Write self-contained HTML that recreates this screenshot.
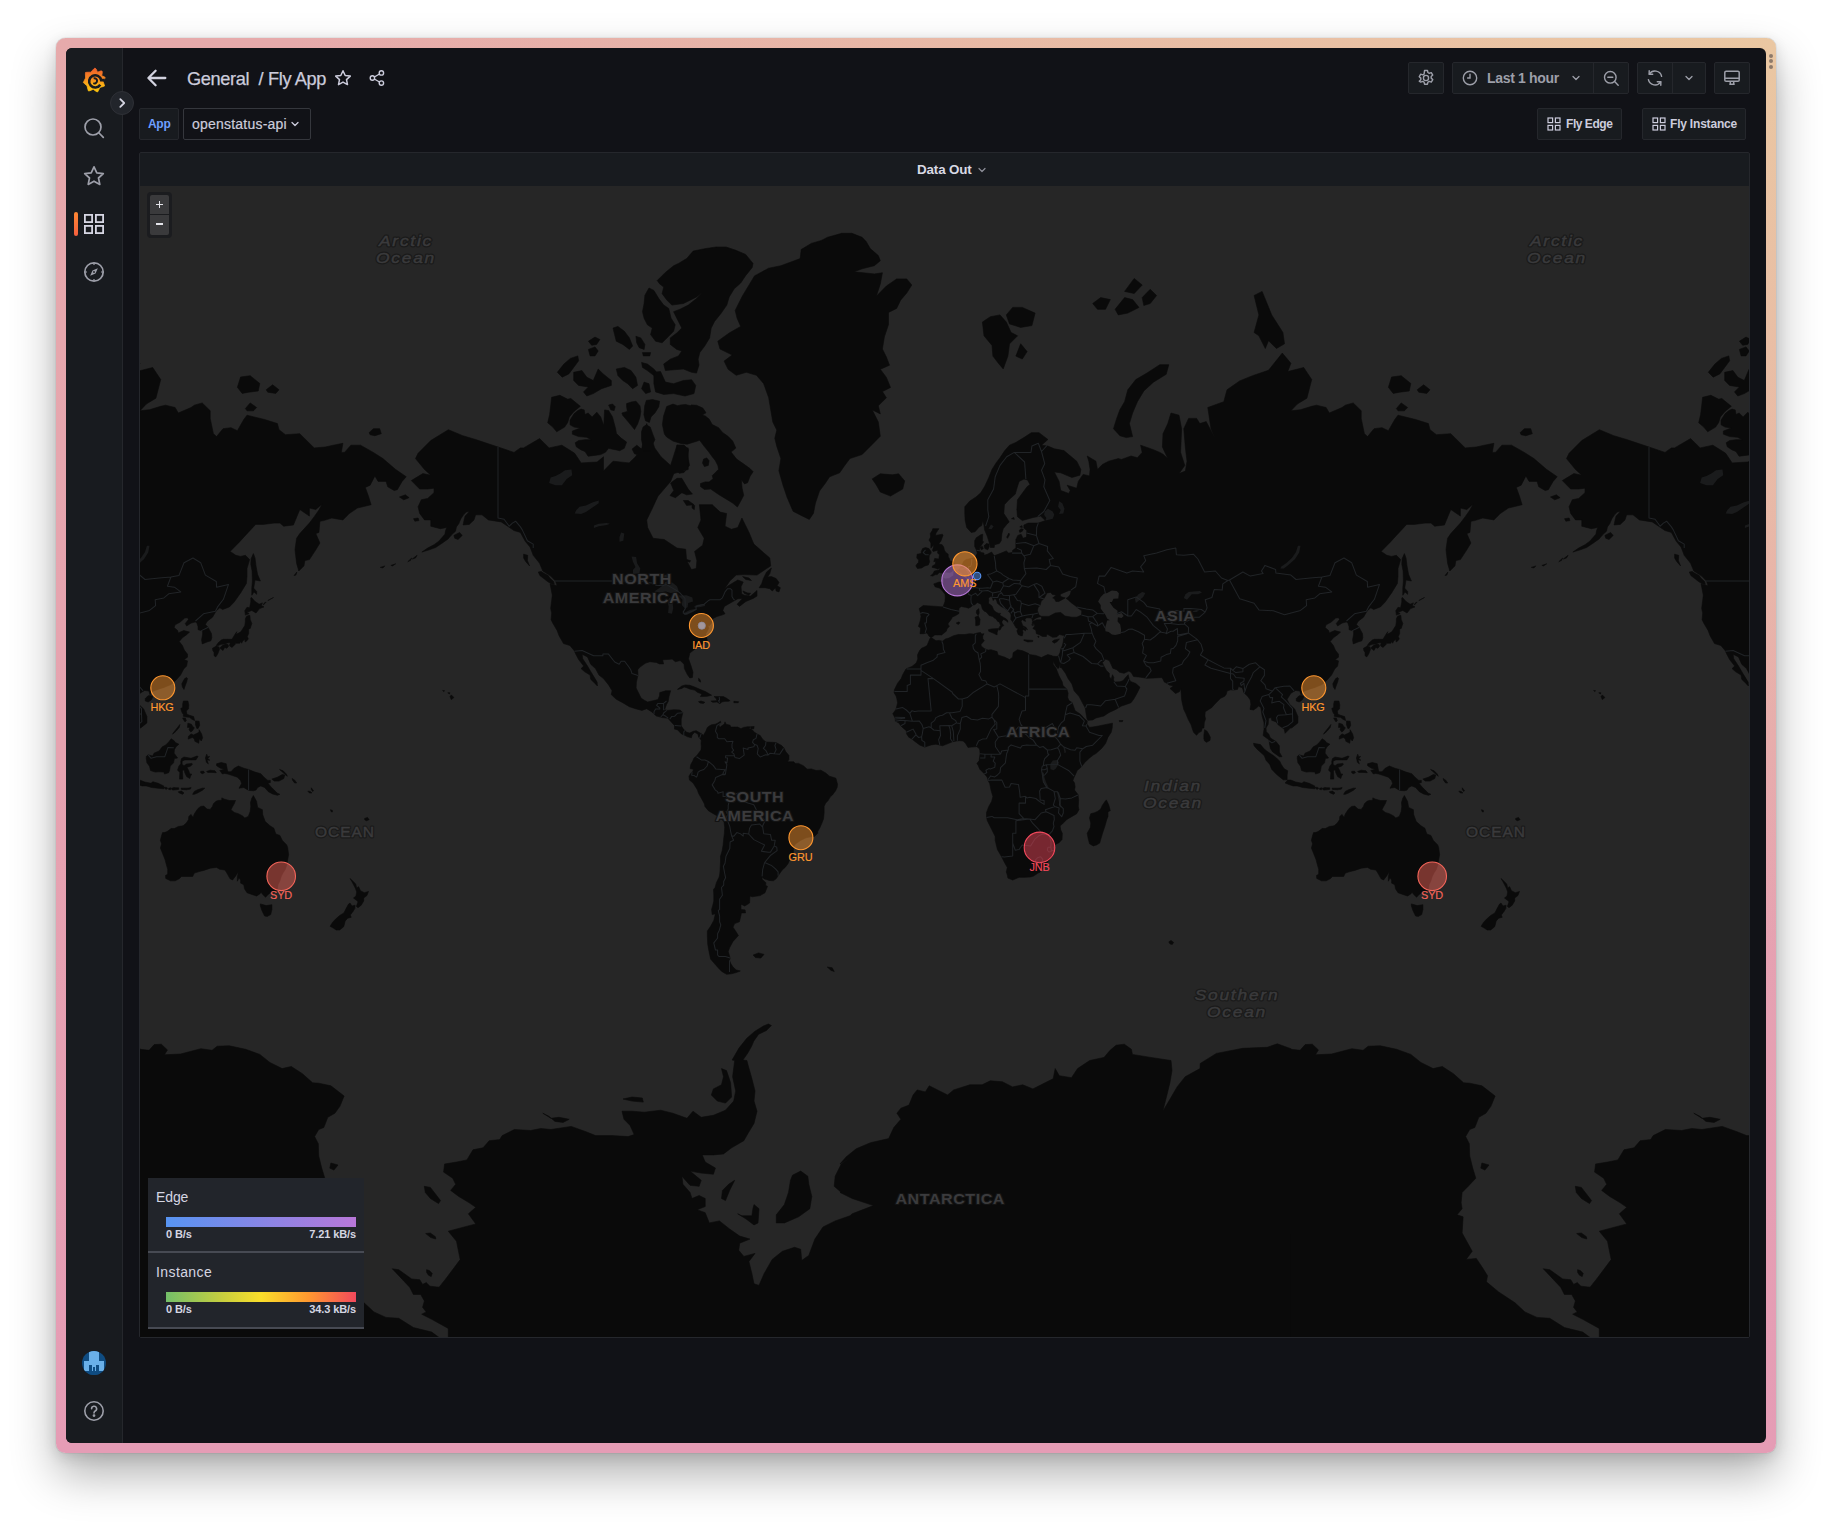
<!DOCTYPE html>
<html lang="en">
<head>
<meta charset="utf-8">
<title>Fly App - Grafana</title>
<style>
*{box-sizing:border-box;margin:0;padding:0}
html,body{width:1832px;height:1527px;overflow:hidden;background:#fff;font-family:"Liberation Sans",Arial,sans-serif;color:#ccccdc}
.abs{position:absolute}
#frame{position:absolute;left:56px;top:38px;width:1720px;height:1415px;border-radius:9.5px;
 background:radial-gradient(ellipse 120% 90% at 100% 0%,#eac7a2 0%,rgba(234,199,162,.6) 35%,rgba(234,199,162,0) 72%),linear-gradient(180deg,#e6aaab 0%,#e6a3b0 50%,#e59cb5 100%);
 box-shadow:0 0 1px rgba(0,0,0,.45),0 22px 45px rgba(0,0,0,.30),0 4px 14px rgba(0,0,0,.12)}
#win{position:absolute;left:10px;top:10px;width:1700px;height:1395px;border-radius:6px;background:#111217;overflow:hidden}
#side{position:absolute;left:0;top:0;width:57px;height:100%;background:#181b1f;border-right:1px solid #25272c}
.ico{position:absolute;display:block}
.btn{position:absolute;background:#181b1f;border:1px solid #25272c;border-radius:2px}
.t{position:absolute;white-space:nowrap;line-height:1}
#map{position:absolute;left:0;top:0}
.lbl{font-family:"Liberation Sans",Arial,sans-serif;font-size:10.9px;font-weight:400;text-anchor:middle;letter-spacing:-.15px;stroke-width:.15px}
.cont{font-family:"Liberation Sans",Arial,sans-serif;font-weight:700;font-size:15.5px;fill:#3b3b3d;text-anchor:middle;letter-spacing:.6px}
.ocean{font-family:"Liberation Sans",Arial,sans-serif;font-style:italic;font-weight:700;font-size:15.5px;fill:#1f1f1f;stroke:#444446;stroke-width:1.7px;text-anchor:middle;letter-spacing:1.3px;paint-order:stroke;stroke-linejoin:round}
.ocean2{font-family:"Liberation Sans",Arial,sans-serif;font-weight:700;font-size:15.5px;fill:#1f1f1f;stroke:#444446;stroke-width:1.7px;text-anchor:middle;letter-spacing:1.1px;paint-order:stroke;stroke-linejoin:round}
</style>
</head>
<body>
<div id="frame"><div id="win">
<!-- coordinates inside #win are page coords minus (66,48) -->
<div id="side"></div>

<!-- grafana logo -->
<svg class="ico" style="left:16px;top:19px" width="25" height="27" viewBox="0 0 25 27">
 <defs><linearGradient id="lg" x1="0" y1="1" x2="0" y2="0"><stop offset="0" stop-color="#fcc40c"/><stop offset=".3" stop-color="#fbb015"/><stop offset=".55" stop-color="#f68a21"/><stop offset="1" stop-color="#f05f2b"/></linearGradient></defs>
 <path fill="url(#lg)" stroke="url(#lg)" stroke-width=".8" stroke-linejoin="round" d="M11.8,1.9 13.0,1.0 14.1,2.0 15.5,5.2 18.5,4.0 20.0,4.0 20.3,5.4 19.7,8.7 22.1,9.7 23.2,10.5 22.7,11.7 21.0,14.5 22.2,17.6 22.5,19.0 21.2,19.5 17.8,20.4 16.3,23.8 15.5,25.0 14.2,24.4 11.2,22.3 7.9,23.7 6.5,24.0 6.0,22.7 5.0,18.7 2.3,16.4 1.3,15.5 1.9,14.3 3.6,11.0 3.4,6.9 3.5,5.5 4.9,5.3 8.9,5.2Z"/>
 <path d="M22.8 13.1h-3.6a6.1 6.1 0 1 0-.9 4.700" fill="none" stroke="#181b1f" stroke-width="2.600"/>
 <path d="M11.300 16.200a2.600 2.600 0 1 0 .3-4.800" fill="none" stroke="#181b1f" stroke-width="2"/>
</svg>

<!-- sidebar icons -->
<svg class="ico" style="left:17px;top:69px" width="22" height="22" viewBox="0 0 22 22" fill="none" stroke="#9d9fa9" stroke-width="1.700" stroke-linecap="round"><circle cx="10" cy="10" r="8"/><path d="M16 16l4.300 4.300"/></svg>
<svg class="ico" style="left:17px;top:117px" width="22" height="22" viewBox="0 0 22 22" fill="none" stroke="#9d9fa9" stroke-width="1.700" stroke-linejoin="round"><path d="M11 1.800l2.800 6 6.500.800-4.800 4.400 1.300 6.400L11 16.200l-5.800 3.200 1.300-6.400L1.700 8.600l6.500-.8z"/></svg>
<div class="abs" style="left:8px;top:164px;width:4px;height:24px;border-radius:2px;background:linear-gradient(#ff8833,#f55f3e)"></div>
<svg class="ico" style="left:17px;top:165px" width="22" height="22" viewBox="0 0 22 22" fill="none" stroke="#d6d6e3" stroke-width="1.800"><rect x="1.900" y="1.900" width="7.200" height="7.200"/><rect x="12.900" y="1.900" width="7.200" height="7.200"/><rect x="1.900" y="12.900" width="7.200" height="7.200"/><rect x="12.900" y="12.900" width="7.200" height="7.200"/></svg>
<svg class="ico" style="left:17px;top:213px" width="22" height="22" viewBox="0 0 22 22" fill="none" stroke="#9d9fa9" stroke-width="1.700"><circle cx="11" cy="11" r="9.200"/><path d="M14.800 7.200l-2.300 5.300-5.300 2.300 2.300-5.300z" fill="#9d9fa9" stroke="none"/><circle cx="11" cy="11" r=".9" fill="#181b1f" stroke="none"/><path d="M11 2v2M11 18v2M2 11h2M18 11h2" stroke-width="1.200"/></svg>

<!-- avatar -->
<svg class="ico" style="left:16px;top:1303px" width="24" height="24" viewBox="0 0 24 24"><defs><clipPath id="av"><circle cx="12" cy="12" r="12"/></clipPath></defs><g clip-path="url(#av)"><rect width="24" height="24" fill="#0f4c81"/><path d="M7 0h10v14h-3v6h-1v-4h-2v4h-1v-6H7z" fill="#6ab0e8"/><path d="M2 10h5v10H2zM17 10h5v10h-5z" fill="#6ab0e8"/><path d="M0 20h24v4H0z" fill="#0f4c81"/></g></svg>
<!-- help -->
<svg class="ico" style="left:17px;top:1352px" width="22" height="22" viewBox="0 0 22 22" fill="none" stroke="#9d9fa9" stroke-width="1.600"><circle cx="11" cy="11" r="9.200"/><path d="M8.600 8.800a2.500 2.500 0 1 1 3.600 2.200c-.8.500-1.200.9-1.200 1.900" stroke-linecap="round"/><circle cx="11" cy="15.600" r=".6" fill="#9d9fa9"/></svg>

<!-- sidebar toggle -->
<div class="abs" style="left:44px;top:43px;width:24px;height:24px;border-radius:12px;background:#22252b;border:1px solid #2e3036"></div>
<svg class="ico" style="left:50px;top:49px" width="12" height="12" viewBox="0 0 12 12" fill="none" stroke="#d5d5e2" stroke-width="1.800" stroke-linecap="round" stroke-linejoin="round"><path d="M4.300 2.200L8.200 6 4.300 9.800"/></svg>

<!-- top nav -->
<svg class="ico" style="left:80px;top:20px" width="22" height="20" viewBox="0 0 22 20" fill="none" stroke="#d2d2df" stroke-width="2.300" stroke-linecap="round" stroke-linejoin="round"><path d="M19.300 10H3M9.600 2.800L2.400 10l7.200 7.200"/></svg>
<div class="t" id="title" style="left:121px;top:22px;font-size:18.2px;color:#ccccdc;letter-spacing:-.36px;-webkit-text-stroke:.25px #ccccdc">General&nbsp; / Fly App</div>
<svg class="ico" style="left:268px;top:21px" width="18" height="18" viewBox="0 0 18 18" fill="none" stroke="#ccccdc" stroke-width="1.500" stroke-linejoin="round"><path d="M9 1.800l2.200 4.700 5.100.6-3.800 3.500 1 5L9 13.100l-4.500 2.500 1-5L1.700 7.100l5.100-.6z"/></svg>
<svg class="ico" style="left:302px;top:21px" width="18" height="18" viewBox="0 0 18 18" fill="none" stroke="#ccccdc" stroke-width="1.400"><circle cx="13.400" cy="3.900" r="2.200"/><circle cx="4.400" cy="9" r="2.200"/><circle cx="13.400" cy="14.100" r="2.200"/><path d="M6.300 8l5.200-3M6.300 10l5.200 3"/></svg>

<!-- right toolbar -->
<div class="btn" style="left:1342px;top:14px;width:36px;height:32px"></div>
<svg class="ico" style="left:1351px;top:21px" width="18" height="18" viewBox="0 0 16 16" fill="none" stroke="#9d9fa9" stroke-width="1.25"><circle cx="8" cy="8" r="2.300"/><path d="M6.700 1.300h2.600l.4 1.800 1.200.7 1.800-.6 1.300 2.200-1.400 1.300v1.400l1.400 1.300-1.300 2.200-1.800-.6-1.200.7-.4 1.800H6.700l-.4-1.800-1.200-.7-1.800.6L2 10.800l1.400-1.300V8.100L2 6.800l1.300-2.200 1.800.6 1.200-.7z" stroke-linejoin="round"/></svg>

<div class="btn" style="left:1386px;top:14px;width:177px;height:32px"></div>
<div class="abs" style="left:1527px;top:14px;width:1px;height:32px;background:#25272c"></div>
<svg class="ico" style="left:1396px;top:22px" width="16" height="16" viewBox="0 0 16 16" fill="none" stroke="#9d9fa9" stroke-width="1.400" stroke-linecap="round"><circle cx="8" cy="8" r="6.700"/><path d="M8 4.300V8H5.600"/></svg>
<div class="t" id="tp" style="left:1421px;top:23px;font-size:14px;font-weight:700;color:#9d9fa9;letter-spacing:-.32px">Last 1 hour</div>
<svg class="ico" style="left:1505px;top:26px" width="10" height="8" viewBox="0 0 10 8" fill="none" stroke="#9d9fa9" stroke-width="1.300" stroke-linecap="round" stroke-linejoin="round"><path d="M2 2.500l3 3 3-3"/></svg>
<svg class="ico" style="left:1537px;top:22px" width="17" height="17" viewBox="0 0 17 17" fill="none" stroke="#9d9fa9" stroke-width="1.400" stroke-linecap="round"><circle cx="7.300" cy="7.300" r="5.800"/><path d="M11.600 11.600l3.600 3.600M4.800 7.300h5"/></svg>

<div class="btn" style="left:1571px;top:14px;width:69px;height:32px"></div>
<div class="abs" style="left:1606px;top:14px;width:1px;height:32px;background:#25272c"></div>
<svg class="ico" style="left:1580px;top:21px" width="18" height="18" viewBox="0 0 18 18" fill="none" stroke="#9d9fa9" stroke-width="1.450" stroke-linecap="round" stroke-linejoin="round"><path d="M15.600 7.300A6.800 6.800 0 0 0 3.300 5.100M2.400 10.700a6.800 6.800 0 0 0 12.300 2.200"/><path d="M3.200 1.800v3.500h3.500M14.800 16.200v-3.500h-3.500"/></svg>
<svg class="ico" style="left:1618px;top:26px" width="10" height="8" viewBox="0 0 10 8" fill="none" stroke="#9d9fa9" stroke-width="1.300" stroke-linecap="round" stroke-linejoin="round"><path d="M2 2.500l3 3 3-3"/></svg>

<div class="btn" style="left:1648px;top:14px;width:36px;height:32px"></div>
<svg class="ico" style="left:1657px;top:21px" width="18" height="18" viewBox="0 0 18 18" fill="none" stroke="#9d9fa9" stroke-width="1.500" stroke-linejoin="round"><rect x="1.800" y="2.300" width="14.400" height="10" rx="1.300"/><path d="M1.800 9.300h14.400M6.300 15.300h5.400M7.300 12.300v3M10.700 12.300v3"/></svg>

<!-- submenu -->
<div class="btn" style="left:73px;top:60px;width:40px;height:32px"></div>
<div class="t" id="app" style="left:82px;top:70px;font-size:12px;font-weight:700;color:#6e9fff;letter-spacing:-.3px">App</div>
<div class="abs" style="left:117px;top:60px;width:128px;height:32px;border:1px solid #35373d;border-radius:2px;background:#111217"></div>
<div class="t" id="sel" style="left:126px;top:69px;font-size:14px;color:#ccccdc;letter-spacing:.22px;-webkit-text-stroke:.2px #ccccdc">openstatus-api</div>
<svg class="ico" style="left:224px;top:72px" width="10" height="8" viewBox="0 0 10 8" fill="none" stroke="#ccccdc" stroke-width="1.300" stroke-linecap="round" stroke-linejoin="round"><path d="M2 2.500l3 3 3-3"/></svg>

<div class="btn" style="left:1471px;top:60px;width:85px;height:32px"></div>
<svg class="ico" style="left:1481px;top:69px" width="14" height="14" viewBox="0 0 14 14" fill="none" stroke="#ccccdc" stroke-width="1.200"><rect x="1" y="1" width="4.600" height="4.600"/><rect x="8.400" y="1" width="4.600" height="4.600"/><rect x="1" y="8.400" width="4.600" height="4.600"/><rect x="8.400" y="8.400" width="4.600" height="4.600"/></svg>
<div class="t" id="fe" style="left:1500px;top:70px;font-size:12px;font-weight:700;color:#ccccdc;letter-spacing:-.45px">Fly Edge</div>
<div class="btn" style="left:1576px;top:60px;width:104px;height:32px"></div>
<svg class="ico" style="left:1586px;top:69px" width="14" height="14" viewBox="0 0 14 14" fill="none" stroke="#ccccdc" stroke-width="1.200"><rect x="1" y="1" width="4.600" height="4.600"/><rect x="8.400" y="1" width="4.600" height="4.600"/><rect x="1" y="8.400" width="4.600" height="4.600"/><rect x="8.400" y="8.400" width="4.600" height="4.600"/></svg>
<div class="t" id="fi" style="left:1604px;top:70px;font-size:12px;font-weight:700;color:#ccccdc;letter-spacing:-.2px">Fly Instance</div>

<!-- panel -->
<div class="abs" style="left:73px;top:104px;width:1611px;height:1186px;background:#181b1f;border:1px solid #25272c;border-radius:2px"></div>
<div class="t" id="ptitle" style="left:851px;top:114.5px;font-size:13.4px;font-weight:700;color:#d8d9e4;letter-spacing:-.15px">Data Out</div>
<svg class="ico" style="left:911px;top:118px" width="10" height="8" viewBox="0 0 10 8" fill="none" stroke="#8e8f99" stroke-width="1.200" stroke-linecap="round" stroke-linejoin="round"><path d="M2 2.500l3 3 3-3"/></svg>

<!-- map: page coords via viewBox offset -->
<svg id="map" class="abs" style="left:74px;top:138px" width="1609" height="1151" viewBox="140 186 1609 1151">
<rect x="140" y="186" width="1609" height="1151" fill="#262626"/>
<defs><clipPath id="mc"><rect x="140" y="186" width="1609" height="1151"/></clipPath>
<g id="world"><path d="M929.9,638.5 931.9,638.1 936,640.8 939.2,640.4 942.4,641.2 945.6,638.9 948.8,638.1 953.6,635.7 958.4,634.5 964.8,634.5 969.6,633.7 973.7,634.1 977.6,632.9 980.5,632.5 981.7,634.1 984,633.7 982.7,636.1 982.7,638.5 984.3,640.8 981.1,644.3 981.1,645.9 984.3,648.6 988.1,650.1 991,649.7 997.1,651.6 998,655 1004.8,657.2 1009.5,659.5 1012.7,657.2 1013.1,652.7 1017.5,649.7 1022.7,650.8 1028.7,653.5 1029.4,654.6 1035.8,655.4 1041.5,657.6 1044.4,656.1 1047.9,654.6 1052.1,655.7 1053,660.9 1053.3,664.6 1056.2,668.6 1058.8,675.4 1062.3,682.1 1062.9,685.6 1066.8,689.1 1068.1,693.2 1067.7,697.3 1068.7,700.3 1072.2,702.7 1075.1,710.7 1080.5,714.3 1084.4,718.6 1087.2,720.9 1086.9,723.9 1089.5,727.4 1095.9,726.5 1102.3,725.2 1108.7,723.9 1112.5,723.2 1112.2,727.8 1111.2,732.3 1108,737.2 1105.5,743.6 1101.6,748.4 1095.9,753.5 1093.6,754.8 1089.5,758 1084.7,762.5 1081.5,766.6 1079.6,768.6 1077.3,770.2 1075.7,774 1074.1,777.2 1072.9,780.4 1074.5,783 1075.1,786.9 1074.5,790.1 1078,794.6 1078.6,799.9 1078.3,806.4 1078.9,809.7 1076.7,813.7 1070.3,817.4 1066.8,819.4 1062.3,824.1 1060.1,825.8 1060.7,829.9 1062.3,833.3 1062,839.6 1059.1,842.7 1054.3,844.9 1053,847.3 1054,850.9 1052.4,856.3 1047.9,861.5 1044.7,866.7 1039.9,872.3 1038,873.1 1033.5,876.1 1030.6,876.9 1025.5,877.3 1019.1,877.3 1012.7,880 1007.9,878.1 1007.3,875 1006.3,871.9 1007.3,867.4 1004.1,861.8 1001.6,856.7 997.4,849.5 995.2,840.3 995.2,836.4 991.6,829.2 987.2,820.4 986.5,816.4 986.5,812.4 988.8,806.4 991.6,801.5 992.9,796.6 991,790.1 989.7,783.6 988.1,780.4 987.2,777.2 984.3,773.7 979.8,769.2 978.2,765.4 976.9,763.4 979.2,760.6 979.5,757.7 980.1,753.8 979.8,750 979.2,748.4 976.6,746.5 975.3,746.8 971.2,747.1 968,747.4 965.7,743.6 963.2,741 959.7,740.7 956.5,741 952.6,741.7 948.8,743.3 945.6,744.6 942.4,745.8 939.2,744.9 936,744.2 931.2,744.9 924.8,747.1 920,745.2 914.3,741 912,739.1 908.8,737.2 906.6,733.9 906.3,730.7 902.4,727.4 900.8,725.8 898.9,722.9 895.4,721.2 895.1,718 892.8,713.7 896,709.4 897.6,702.7 896.7,698 896,695.9 894.1,692.8 894.4,689.8 897.6,683.2 901.2,678.6 902.8,674.4 906,669 907.6,668.2 912,666.4 916.2,663.1 917.8,659.1 917.5,655 919.4,650.8 921.6,648.2 924.5,647 927.1,645.5 928.7,641.6ZM1106.4,799.9 1108.7,804.8 1110.3,810.7 1108,811.7 1108,816.4 1106.7,819.7 1104.8,826.5 1102.3,834 1099.7,843.1 1096.5,844.9 1093.3,845.9 1089.5,843.8 1088.2,838.5 1087.2,833.3 1090.4,827.5 1090.8,823.1 1089.5,818 1090.8,813.7 1094.6,812.7 1097.5,811.4 1100.7,809.1 1102.3,805.4 1104.8,801.8ZM140,1049.3 149.1,1050.3 154.2,1044.6 161.3,1044.2 167.4,1049.9 164.4,1054.8 180.6,1054 200.9,1048.7 212.1,1050.3 217.2,1046.2 229.3,1045.8 245.6,1049.3 259.8,1054.4 269.9,1062.5 282.1,1068.6 291.3,1066.5 302.4,1073.7 312.6,1082.8 318.7,1083.2 330.9,1085.8 344.1,1096 340,1106.1 334.9,1113.2 327.8,1117.3 323.8,1127.5 318.7,1129.5 314.6,1136.6 318.3,1143.7 318.7,1155.9 321.7,1168.1 324.8,1178.2 317.2,1186.3 311.1,1192.4 310.1,1202.6 311.1,1208.7 306,1214.8 312.1,1216.8 311.1,1233 321.2,1251.3 315.1,1259.4 325.3,1258.4 331.4,1267.6 336.5,1275.7 335.4,1281.8 347.6,1291.9 364,1302.8 373.9,1311.9 385.9,1317.4 398.7,1318.3 413.4,1327.5 431.7,1332.1 439.1,1337.5 439.1,1352 448.3,1352 448.3,1328.4 431.7,1319.3 421.7,1314.2 426.2,1311.9 422.6,1307.3 424.4,1300.9 420.7,1294.5 413.4,1294.5 409.7,1287.2 392.3,1268.8 398.7,1269.7 411.6,1278.9 419.8,1279.8 422.6,1284.4 426.2,1282.6 429.9,1286.2 439.1,1287.2 446.4,1278 460.2,1259.6 456.5,1241.3 448.3,1231.2 475.8,1223.9 468.4,1213.8 475.8,1207.3 468.9,1202.6 458.8,1196.5 450.7,1190.4 455.7,1184.3 452.7,1178.2 443.6,1172.1 444.6,1164 456.8,1162 466.9,1159.9 473,1149.8 483.1,1147.8 489.2,1140.7 500,1139.6 499.1,1140.7 502.2,1135.6 514.4,1129.5 530.6,1130.5 540.8,1128.5 550.9,1129.5 571.2,1126.4 585.4,1131.5 595.6,1135.6 611.8,1135.6 628.1,1136.6 634.2,1134.6 630.1,1125.4 624,1119.3 622,1111.2 632.1,1111.2 644.3,1112.2 660.6,1110.2 672.7,1113.2 687,1118.3 693,1111.2 701.2,1117.3 713.4,1115.3 725.5,1110.2 733.7,1101.1 735.7,1090.9 732.6,1076.7 734.7,1060.5 732.1,1060 739,1048.1 746.8,1038.3 754.7,1031.4 763.5,1026 768.4,1024 771.4,1025.5 766.5,1030.4 758.6,1034.3 753.7,1041.2 751.7,1046.1 747.8,1053 742.9,1060 746.9,1060.5 747.9,1064.5 751.9,1078.7 755,1090.9 754,1101.1 757,1111.2 754,1123.4 747.9,1133.6 743.8,1140.7 731.6,1147.8 723.5,1153.9 713.4,1154.9 702.2,1154.9 705.2,1162 715.4,1168.1 713.4,1174.2 701.2,1173.1 690,1171.1 701.2,1180.3 699.1,1186.3 690,1185.3 681.9,1176.2 682.9,1184.3 690,1192.4 692,1198.5 699.1,1195.5 705.2,1198.5 705.2,1206.6 697.1,1209.7 705.2,1212.7 709.3,1222.9 719.4,1220.9 729.6,1229 739.7,1236.1 749.9,1239.1 739.7,1243.2 738.7,1250.3 743.8,1256.4 755,1253.4 748.9,1261.5 751.9,1273.7 754,1283.8 759,1285.4 764.1,1273.7 772.2,1259.4 782.4,1251.3 794.6,1247.3 800.7,1249.3 801.7,1260.5 808.8,1255.4 814.9,1239.1 823,1227 835.2,1220.9 850,1215.8 852.2,1213.8 873.5,1205.6 852.2,1198.5 840,1192.4 841.3,1192.4 834.2,1186.3 835.2,1176.2 841.3,1164 850,1157.9 840,1164 846.1,1156.9 856.2,1148.8 870.5,1142.7 888.7,1138.6 893.8,1127.5 900.9,1119.3 896.9,1113.2 900.9,1108.2 909,1105.1 913.1,1095 917.2,1089.9 925.3,1091.9 929.3,1085.8 939.5,1090.9 947.6,1095 953.7,1089.9 969.9,1084.8 982.1,1084.8 990.3,1080.8 1002.4,1081.8 1012.6,1086.9 1022.7,1084.8 1032.9,1088.9 1045.1,1082.8 1053.2,1078.7 1055.2,1068.6 1059.3,1075.7 1071.5,1077.7 1077.6,1068.6 1089.7,1060.5 1104,1057.4 1110.1,1050.3 1116.1,1045.2 1124.3,1044.2 1131.4,1049.3 1132.4,1054.4 1150.7,1057.4 1171,1060.5 1172,1070.6 1169.9,1082.8 1166.9,1095 1162.8,1111.2 1168.9,1101.1 1177.1,1086.9 1185.2,1076.7 1200,1068.6 1200.2,1063.5 1216.4,1053.4 1242.8,1048.3 1267.2,1047.3 1277.3,1043.8 1290.9,1048.7 1291,1360 140,1360ZM792.5,1175.2 800.7,1171.1 807.8,1176.2 808.8,1184.3 811.8,1196.5 809.8,1208.7 798.6,1216.8 784.4,1222.9 776.3,1222.9 776.3,1214.8 784.4,1204.6 788.5,1192.4 790.5,1180.3ZM734.7,1180.3 729.6,1190.4 725.5,1200.6 721.5,1198.5 722.5,1190.4 728.6,1184.3ZM754,1204.6 759,1208.7 758,1222.9 754,1224.9 745.8,1218.8 737.7,1213.8 741.8,1215.8 751.9,1215.8 752.9,1208.7ZM721.5,1068.6 726.5,1070.6 730.6,1082.8 731.6,1097 725.5,1103.1 717.4,1101.1 711.3,1095 713.4,1088.9 721.5,1084.8 723.5,1076.7ZM623,1099 632.1,1097 642.3,1098 643.3,1102.1 632.1,1101.1ZM542.8,1113.2 548.9,1116.3 555,1121.4 563.1,1122.4 569.2,1119.3 559,1117.3 550.9,1118.3ZM424.3,1186.3 430.4,1187.4 440.5,1200.6 438.5,1203.6 430.4,1198.5 425.3,1192.4ZM330.9,1163 338,1165 333.9,1170.1 329.8,1168.1ZM425.7,1233.5 430.3,1233 435.4,1236.7 435.8,1239 430.8,1237.6ZM426.6,1269.7 429.4,1270.6 432.2,1273.4 431.2,1276.6 428.5,1275.2 426.6,1272.4ZM551.6,397.3 559.9,395.3 567.7,399.2 570.8,398.5 580.3,406.3 574,411.4 569.3,416.9 567.7,422.4 564.6,427.1 556.7,431.8 552.8,427.1 547.7,422.8 549.6,414.6 550.8,405.1ZM581.1,409.1 584.2,409.9 585,414.6 588.1,413 592.1,416.9 596.8,412.2 600.7,416.9 603.8,425.6 604.6,409.9 608.6,410.6 612.5,416.9 615.6,428.7 616.4,433.4 621.1,438.1 626.6,442.1 624.3,448.3 619.6,450.7 616.4,449.9 611.7,449.1 608.6,448.3 605.4,452.3 600.7,454.6 594.4,455.4 588.1,456.2 585,451.5 581.1,449.9 576.3,446.8 575.2,442.8 578.7,440.5 585,439.7 591.3,439.7 586.6,437.3 578.7,436.6 572.4,434.2 572.4,431.1 580.3,427.9 574,427.1 570.1,424.8 570.1,420.1 574,413.8 577.9,410.6ZM608.6,405.1 612.5,404 615.2,406.7 614.1,410.6 610.9,409.9ZM626.6,403.6 631.3,402 636,401.2 640,405.9 640.8,411.4 640,416.9 637.6,424 634.5,429.5 631.3,425.6 627.4,420.8 622.7,415.3 621.9,413 627.4,411.4 626.6,406.7ZM646.3,400.4 652.5,399.6 659.6,401.2 658.8,406.7 654.9,413 651,416.9 649.4,422.4 645.5,420.8 643.9,414.6 644.7,405.9ZM646.3,424.8 650.2,427.1 652.5,433.4 654.9,439.7 652.5,444.4 651,450.7 643.9,450.7 641.5,439.7 641.5,431.8 643.1,427.1ZM632.1,449.1 636.8,445.2 641.5,449.1 643.9,453.1 640,455.4 634.5,453.8ZM663.6,415.9 666.7,406.5 673,404.1 677.7,405.7 680.8,404.9 685.6,404.5 690.3,405.7 691.1,404.9 696.6,405.3 702.8,408.1 706,412.8 702.1,415.1 705.2,415.9 709.1,419.1 712.3,424.6 718.6,427.7 722.5,432.4 728,436.3 732.7,441.1 735.8,448.1 731.1,452.1 736.6,459.1 744.5,464.6 750,468.6 753.1,471.7 750,476.4 747.6,482.7 744.5,483.9 741.3,479.6 742.1,488.2 743.7,495.3 741.3,500 737.4,507 732.7,503.1 726.4,499.2 718.6,494.5 710.7,489 704.4,489.4 700.5,486.6 700.5,483.5 705.2,481.9 709.1,481.9 713.1,478.8 712.3,475.6 715.4,472.5 718.6,469.3 717.8,465.4 715.4,460.7 712.3,456.8 708.3,451.3 704.4,446.6 699.7,440.3 695,441.8 687.1,444.2 680.8,443.4 673,441.1 666.7,437.1 664.4,434 662.4,424.6ZM703.6,459.1 706.8,457.9 709.1,460.7 708.3,465.4 704.4,466.6 702.5,463.1ZM676.9,445 684,445 688.7,449.7 687.1,455.2 688.7,460.7 689.5,465.4 684,472.5 679.3,473.3 673.8,468.6 674.6,460.7 676.9,452.8ZM657.2,280.6 665.4,272.4 673.6,265.8 678.5,263.4 686.7,258.5 693.2,251.1 704.7,248.7 716.1,247 726,247 735.8,250.3 745.6,254.4 753,263.4 752.2,267.5 745.6,275.7 740.7,283 734.2,288.8 729.2,297 726.8,305.1 721.1,313.3 714.5,321.5 711.2,328.1 709.6,337.9 704.7,346.1 699.8,352.6 698.1,359.2 699,364.9 696.5,373.1 691.6,372.3 683.4,369 673.6,369.8 665.4,370.6 663.7,364.1 670.3,359.2 678.5,355.9 681.8,351 676.8,349.4 670.3,344.4 670.3,337.9 676.8,333 681.8,328.1 676.8,318.2 673.6,311.7 680.1,309.2 688.3,305.1 696.5,298.6 703,292 696.5,297 683.4,303.5 671.9,305.1 667,300.2 662.1,293.7 663.7,287.1 659.7,283.9ZM649,288 653.9,290.4 658.8,298.6 663.7,305.1 668.7,308.4 671.1,318.2 675.2,324.8 673.6,331.3 667,337.9 662.1,342.8 655.6,341.2 650.6,334.6 652.3,328.1 647.4,324.8 644.1,318.2 642.5,311.7 644.1,303.5 644.9,295.3ZM653.9,372.3 660.5,371.5 665.4,382.1 673.6,383.7 683.4,380.5 691.6,379.7 695.7,385.4 694,393.6 685,396 673.6,393.6 663.7,394.4 655.6,391.9 653.9,383.7ZM641.6,362.5 647.4,364.1 653.9,369 657.2,373.1 653.9,375.6 647.4,370.6 642.5,367.4ZM644.1,382.1 649,383.7 650.6,391.9 645.7,393.6 641.6,388.7ZM616.3,369 624.4,367.4 631,370.6 635.9,377.2 637.5,385.4 632.6,388.7 627.7,383.7 622.8,380.5 617.9,375.6ZM573.7,372.3 581.9,370.6 586.8,377.2 593.3,380.5 598.2,369 603.2,373.9 611.3,380.5 611.3,385.4 601.5,388.7 593.3,393.6 586.8,396 583.5,391.9 588.4,387 578.6,385.4 573.7,380.5ZM557.3,372.3 563.9,364.1 570.4,358.4 577.8,355.9 578.6,360.8 573.7,367.4 568.8,373.9 562.2,377.2ZM588.4,341.2 595,337.1 599.9,339.5 596.6,344.4 591.7,345.3ZM588.4,349.4 595,346.9 598.2,351 595,355.9 590.1,355.9ZM613,328.1 617.9,326.4 624.4,331.3 629.4,337.9 632.6,346.1 629.4,349.4 622.8,344.4 616.3,341.2 614.6,334.6ZM635.9,336.3 640.8,337.9 644.9,344.4 644.1,349.4 639.2,347.7 636.7,342.8ZM642.5,352.6 650.6,352.6 649.8,355.9 643.3,355.9ZM920,633.7 920.7,628 918.4,626.4 920.3,620.6 921,616.4 920.3,612.5 919.1,608.6 923.2,605.6 930.3,606 936.7,606.4 943,606.9 945,601.5 945.3,597 945,594.3 941.8,590.1 939.8,588.2 935.1,586.8 933.8,583.9 939.2,582 943.7,582.9 943.7,578 945,579 949.1,578.5 953.6,575.6 953.9,571.5 959,569.5 961.6,565.9 963.8,561.2 966.1,559.6 970.9,558.5 974.7,557.4 976.3,555.3 977.3,553.1 976.3,549.8 974.7,546.4 974.7,540.7 976.3,537.7 980.8,534.8 982.7,534.2 982.4,541.2 983.6,541.8 981.4,545.3 979.8,547 979.5,550.3 980.8,552.5 984,553.1 984,555.3 987.5,554.2 991.6,552 994.2,555.8 1000,553.6 1006.3,550.9 1008.6,553.1 1012.4,552.5 1012.7,550.3 1015.9,548.1 1015.9,539.5 1017.9,535.4 1021.1,534.2 1023,538.3 1026.5,537.1 1026.8,530.6 1023.9,528.1 1023.9,525 1028.1,523.1 1038.3,523.1 1045.4,520.6 1040.6,516.1 1033.5,517.4 1028.7,518.7 1022.3,520.6 1017.5,516.7 1016.9,509.5 1017.5,499.8 1021.7,494.1 1027.1,486.7 1030,484.5 1027.5,479.9 1023.9,479.1 1019.1,481.4 1016.9,488.2 1015.3,494.1 1008.9,499.8 1004.4,504.7 1003.8,513.5 1007.3,518.7 1009.2,521.9 1006.7,524.4 1003.2,528.7 1001.9,533.6 1001.2,540.7 999.3,543.5 994.5,544.7 994.2,547.5 990.4,547.5 989.4,543 987.2,536 984.6,529.9 984,525.6 982.7,520.6 981.7,525.6 979.2,526.9 975,531.8 971.2,532.4 966.7,527.5 965.1,519.9 964.8,513.5 964.8,506.8 969.6,501.2 976,497 980.8,492.7 984.9,486 988.8,477.5 992,469.5 996.1,462.9 1000,457.7 1004.8,450.6 1009.5,445.2 1015.9,442.4 1023.9,437.6 1031.3,432.7 1039,432.7 1047.9,439.5 1041.5,445.2 1047.9,446.1 1054.3,448.8 1063.9,450.6 1076.7,461.2 1080.8,469.5 1079.9,475.2 1071.9,477.5 1060.7,472.8 1054.3,471.9 1059.1,481.4 1060.7,490.5 1068.7,493.4 1070.3,490.5 1067.1,485.2 1076.7,488.2 1078.3,481.4 1083.1,474.4 1089.5,475.9 1090.1,469.5 1088.8,461.2 1087.2,456 1095.9,461.2 1097.5,469.5 1102.3,464.5 1108.7,461.2 1118.3,458.6 1121.5,459.4 1131,456 1137.4,457.7 1142.2,452.4 1140.6,445.2 1153.4,449.7 1159.8,452.4 1163,454.2 1167.8,458.6 1162.4,447 1163,433.7 1167.8,423.6 1171,413 1179,415.2 1181.6,428.7 1180.6,452.4 1184.8,465.4 1179,473.6 1185.4,471.1 1187,461.2 1185.4,447.9 1183.8,428.7 1188.6,418.4 1196.6,418.4 1199.8,423.6 1206.2,421.6 1212.6,433.7 1215.8,440.5 1211,428.7 1207.8,407.5 1223.8,401.7 1227,389.8 1239.7,380.9 1252.5,375.7 1268.5,370.3 1282.3,353.1 1290.9,363.3 1287.7,371.6 1303.7,367.5 1311.7,379.6 1306.9,398.2 1297.3,404 1290.9,410.8 1300.5,409.7 1311.7,406.3 1316.5,405.2 1326.1,407.5 1329.3,413 1342.1,407.5 1345.3,405.2 1353.2,402.9 1361.2,410.8 1361.2,418.4 1364.4,433.7 1367.6,436.6 1374,428.7 1382,427.7 1388.4,430.7 1394.8,419.5 1398,415.2 1415.6,419.5 1428.4,423.6 1430,429.7 1436.4,434.7 1450.8,433.7 1460.4,443.3 1465.2,447.9 1476.3,447 1484.3,445.2 1493.9,443.3 1492.3,452.4 1495.5,452.4 1501.9,445.2 1511.5,445.2 1524.3,452.4 1533.9,458.6 1546.7,469.5 1557.2,476.7 1553.1,481.4 1548.3,489.7 1545.1,490.5 1538.7,486.7 1537.1,481.4 1529.1,481.4 1525.9,475.9 1521.1,485.2 1516.3,487.5 1519.5,496.3 1522.1,504.7 1508.3,508.1 1500.3,513.5 1493.9,519.9 1482.7,518 1474.7,520.6 1470.9,521.2 1469.9,532.4 1466.8,533.6 1470.9,543 1466.8,549.8 1460.4,559.6 1455.9,560.6 1454.9,565.9 1449.8,571 1447.6,563.3 1446,549.8 1447.6,538.3 1450.8,533.6 1460.4,523.1 1465.2,516.7 1469.9,510.1 1473.1,504 1466.8,509.5 1460.4,508.1 1460.4,516.1 1450.8,509.5 1444.4,525 1434.8,526.2 1430.9,523.1 1425.2,523.1 1414,524.4 1406.6,524.4 1396.4,535.4 1390,542.4 1381.1,551.4 1386.8,555.3 1391.6,556.4 1396.4,555.3 1400.6,559.6 1398,568.5 1398,576.1 1397.4,583.4 1391.6,592.9 1385.2,602 1380.4,606.9 1373.7,609.5 1370.8,607.8 1367.6,610.4 1366.7,611.7 1363.5,617.2 1358,621.4 1356.4,624.4 1359,627.2 1362.5,633.7 1362.8,637.7 1361.9,640.8 1358,642 1353.2,643.9 1352.6,639.7 1353.6,634.5 1353.6,630.9 1349.1,629.7 1349.1,626.8 1347.8,622.7 1346.2,621.9 1342.1,623.1 1337.6,626 1336.3,623.5 1339.5,619.4 1338.5,617.7 1335.7,618.1 1330.9,622.3 1326.1,624.8 1325.1,627.6 1328.6,630.5 1329.3,632.9 1334.7,630.5 1340.5,632.1 1337.3,634.9 1333.4,637.7 1330.2,641.6 1333.4,645.5 1335.3,650.1 1338.5,654.2 1338.5,657.2 1335,659.5 1338.5,660.9 1337.6,666.1 1334.7,669 1331.5,675.1 1326.7,680.4 1321.9,684.6 1314.2,687.7 1311.7,688.4 1306.2,690.4 1302.1,691.8 1301.1,694.9 1299.9,691.1 1295.7,690.4 1290.9,693.2 1287.1,699.3 1289.3,704 1294.7,709 1297.9,716.6 1297.9,722.9 1291.9,727.8 1290.3,728.1 1285.1,733.3 1284.2,729.1 1281.3,727.1 1278.1,724.8 1276.2,721.9 1271.7,720.3 1271.4,717.6 1268.5,718.3 1268.2,724.2 1266,728.1 1266.3,731.7 1268.8,734.2 1270.4,738.1 1274.3,740.4 1276.2,741.7 1279.4,745.8 1279.4,752.2 1282,756.7 1279.4,756.7 1272.7,751.9 1270.4,748.4 1269.5,743.9 1269.2,740.1 1267.6,738.8 1263.1,735.5 1264,729.4 1264,722.5 1262.1,716 1261.2,710 1260.8,707.4 1258.6,706 1256.4,708 1253.5,710 1250,709.4 1250.9,704.4 1250.3,700 1247.7,696.3 1243.9,692.8 1242.9,689.4 1242.3,687.7 1238.5,686.6 1237.5,689.4 1233.4,690.1 1230.5,689.8 1227,691.1 1226.3,694.2 1224.7,696.3 1220.6,698.3 1215.1,703.7 1211.9,707.4 1208.4,709.7 1205.2,711.7 1204.9,716 1205.5,718.9 1204.3,722.5 1203.9,728.1 1202.3,728.1 1201.4,731.3 1198.8,732.6 1196.6,735.2 1193.7,732.6 1192.4,729.1 1191.1,724.8 1188.3,719.6 1185.7,713.3 1183.8,709.4 1182.2,702.7 1181.6,699.3 1181.2,693.2 1180.9,689.8 1180.9,688.4 1179.3,691.8 1175.5,693.5 1170,688.4 1173.6,686 1169.1,684.9 1166.9,683.2 1164.3,682.1 1163,679.3 1161.7,677.5 1155.3,677.9 1147,678.3 1140.6,677.2 1133.6,676.5 1131,672.2 1128.8,671.1 1124,673.3 1119.5,672.2 1116.7,669.7 1112.8,668.2 1111.2,664.6 1109.3,660.6 1105.5,659.1 1104.2,660.9 1102.3,662.4 1103.9,666.1 1106.4,670.4 1109.3,673.3 1109.3,676.5 1111.2,679.3 1112.5,674.7 1113.8,677.5 1113.5,680 1114.7,682.1 1119.9,681.8 1123,680.7 1125.6,677.5 1128.2,674.7 1129.1,678.6 1130.4,681.4 1135.8,683.5 1140,687.3 1136.5,694.2 1133.6,699.3 1131,702.7 1126.2,704.4 1121.5,706 1115.7,709.4 1108.7,712.7 1103.9,716 1095.9,718 1092.7,719.9 1087.9,720.3 1086.9,718.3 1086,713.3 1085.3,708 1082.4,702.7 1079.2,696.6 1074.1,690.8 1071.9,683.9 1068.1,678.6 1065.5,673.3 1061.3,667.5 1060.1,667.5 1060.4,662.4 1058.8,667.9 1058.1,668.6 1056.2,666.8 1053,660.9 1052.1,656.1 1056.9,656.5 1058.5,655.7 1060.1,652.4 1060.7,649.3 1062.3,645.9 1063.3,641.6 1063.6,638.5 1064.5,635.3 1062.6,635.3 1059.4,634.5 1056.5,636.9 1052.7,637.3 1047,634.1 1046.3,636.5 1042.5,636.5 1039,634.5 1036.4,633.7 1035.8,630.1 1032.9,628.5 1034.8,626 1034.2,623.5 1032.2,623.5 1032.6,621.4 1036.7,619.8 1041.5,619.8 1041.5,617.2 1041.8,616.4 1048.9,616.4 1055.3,613 1060.7,612.5 1064.9,616 1071.9,617.2 1076.7,617.2 1081.5,615.1 1081.8,610.8 1077.6,607.8 1075.7,606 1070.3,602 1068.1,599.7 1066.1,598.4 1068.7,596.6 1070.3,594.3 1071.3,590.5 1074.5,590.1 1069,590.5 1065.5,591.9 1061.3,593.8 1060.1,594.7 1060.7,596.6 1065.2,597.9 1062,599.7 1058.8,601.5 1055.9,601.5 1054.3,598.4 1052.7,597.9 1056.2,595.2 1052.1,594.3 1050.8,592.4 1047,592.9 1045.4,596.1 1043.8,598.8 1041.2,601.1 1040.2,605.1 1038,607.8 1037.4,610.8 1038.3,613 1039,615.1 1041.5,616.4 1038.3,617.2 1035.1,618.5 1032.6,621 1031.9,618.9 1031.6,618.1 1026.8,617.7 1024.9,618.9 1025.5,621.4 1023.6,620.6 1022,619.4 1021.1,621.4 1022.3,624.4 1023.3,627.2 1025.5,628.9 1025.5,630.9 1023.9,629.7 1022.3,630.1 1023,632.5 1022.3,635.7 1020.7,635.7 1018.2,634.5 1016.9,630.9 1018.2,628.5 1016.3,628 1015,626 1013.4,623.1 1012.4,621.4 1010.8,619.4 1011.1,615.1 1010.2,613 1007.9,610.8 1004.8,608.6 1001.2,606.4 997.4,603.3 996.4,599.7 994.8,598.4 993.2,600.6 992.3,597.5 992.6,596.6 990.7,596.6 988.4,597.9 988.8,600.2 988.4,603.3 992,606 993.6,609.9 995.8,612.1 998.7,613.4 1000.6,613.4 999.6,615.1 1003.2,617.2 1006.3,618.9 1007.9,621 1007.6,622.3 1006,620.6 1003.5,619.4 1001.9,621.4 1001.9,623.1 1003.8,625.6 1001.6,626.8 1000.9,628.5 1000,630.1 999,629.7 999.3,627.2 1000.6,625.6 999.3,621.9 997.7,621.4 996.1,618.9 994.5,618.1 992.6,616.4 989.1,615.5 987.8,613.8 985.9,611.7 984.3,611.2 982.4,609.1 981.7,606.4 981.1,604.2 980.1,603.8 977.3,602.4 975,604.7 972.8,605.1 970.9,606.9 968.6,608.2 965.7,607.3 963.2,606.9 961.3,606.4 959,608.2 958.7,611.2 959,613.4 955.8,615.5 952,617.2 951.7,618.5 947.8,623.9 949.4,626.4 947.2,628.5 946.2,631.3 942.7,634.1 941.8,634.9 937.6,634.9 934.7,634.9 931.9,637.3 930.9,637.7 928.7,635.7 928.3,634.5 926.4,632.9 923.5,633.7ZM735.2,310.4 742.3,296.2 754.5,275.9 768.7,268.2 780.9,265.7 789,262.7 800.2,258.6 801.2,249.5 811.3,243.4 821.5,240.4 827.6,237.3 841.8,233.3 851.9,233.3 862.1,237.3 866.1,241.4 870.2,248.5 878.3,255.6 880.3,260.7 874.3,265.7 862.1,268.8 854,271.8 874.3,273.9 882.4,272.8 880.3,284 876.3,296.2 886.4,286 896.6,278.9 906.7,278.9 911.8,285 906.7,293.1 900.6,300.2 896.6,308.4 888.5,312.4 888.5,324.6 884.4,336.8 882.4,349 886.4,357.1 889.5,365.2 880.3,369.3 886.4,377.4 890.5,387.5 882.4,391.6 886.4,397.7 878.3,405.8 880.3,413.9 872.2,409.8 878.3,422 880.3,436.2 870.2,446.4 862.1,454.5 849.9,458.6 843.8,466.7 839.7,472.8 829.6,476.8 825.5,482.9 819.5,491 815.4,503.2 813.4,513.4 809.3,519.4 801.2,515.4 793.1,511.3 787,497.1 782.9,484.9 778.9,470.7 780.9,458.6 776.8,446.4 774.8,438.3 776.8,430.1 772.8,422 770.7,409.8 768.7,397.7 763.6,383.5 756.5,375.3 746.4,372.3 736.2,375.3 728.1,369.3 724.1,361.1 732.2,355 720,349 717.8,341.2 729.2,333 740.7,326.4 737,318ZM872.2,478.9 880.3,473.8 892.5,474.8 898.6,473.8 904.7,480.9 902.7,489 890.5,496.1 880.3,492 876.3,484.9ZM1404.4,795.6 1407.6,801.5 1408.6,807.4 1413.4,809.7 1413.7,814.7 1416.2,821.4 1421,825.8 1424.9,828.2 1426.8,834 1430.9,835.4 1433.2,840.3 1437.7,844.9 1438.6,847.3 1439.6,854.5 1438,863.7 1436.4,869.3 1434.1,872.7 1432.2,876.5 1430.9,880.8 1429,884.7 1428.1,890.7 1422,892.3 1418.8,894.8 1416.6,897.2 1414,894.8 1412.1,892.3 1410.8,893.9 1407.6,896 1402.8,894.4 1398,892.7 1395.5,888.7 1394.8,884.7 1391.6,883.1 1391.6,880 1390,877.7 1388.4,881.2 1388.4,876.9 1389.4,871.6 1386.8,875.8 1383.6,880 1381.1,878.8 1377.9,873.1 1375.9,870 1370.8,869.3 1367.6,867.4 1361.2,868.2 1354.8,870.4 1350.1,871.6 1345.3,873.1 1343.7,876.5 1338.9,876.5 1332.5,876.5 1330.2,878.8 1326.1,880.8 1321.6,880.8 1316.8,878.5 1316.5,875.4 1318.7,874.2 1318.7,869.3 1317.1,863.7 1316.2,860 1315.2,857.4 1313.6,853.4 1311.4,848 1312.6,843.8 1311.4,840.3 1312.6,835.4 1313.6,832.6 1315.2,832.6 1318.1,831.6 1322.2,828.5 1325.4,828.5 1329.3,826.5 1334.1,825.8 1337.3,823.1 1339.5,819.7 1339.8,816.4 1342.1,814.4 1344,817.4 1345.3,814 1346.9,811.4 1349.1,808.4 1351.7,806.4 1354.8,806.1 1358,809.1 1361.2,809.4 1363.5,806.4 1364.4,803.8 1367,801.2 1369.2,800.5 1372.8,800.2 1372.8,797.9 1375.6,799.2 1380.4,800.5 1383.6,800.5 1386.5,800.5 1385.2,803.8 1383.3,807.1 1382,809.7 1385.2,812.4 1389.4,813.7 1393.2,815.7 1395.8,818 1399.3,816.4 1401.2,811.4 1401.8,806.4 1401.5,802.5 1402.8,798.2ZM930.6,575.6 932.8,574.1 934.4,571 939.2,570 940.2,568 937.6,569 935.1,568 932.2,567.4 932.5,565.9 935.4,564.3 935.7,561.2 933.8,561.7 934.4,559.6 934.7,558.5 938.9,559 939.2,556.4 939.5,554.7 937.6,553.1 937.9,550.3 933.1,551.4 932.5,550.3 933.5,547 933.8,544.7 930.9,548.1 930.9,543 929,540.1 930.6,537.1 930.3,533.6 932.2,530.6 932.8,528.7 938.9,528.7 936,533 935.4,535.4 942.4,534.2 943,535.4 942.1,537.7 940.8,541.2 939.8,542.4 938.6,544.1 942.1,544.7 943.7,547 944.3,549.8 945.3,552 948.2,554.2 948.2,556.9 949.1,558 949.8,560.1 949.8,561.2 953,561.2 954.2,563.3 953.9,565.9 952,566.9 951.7,568.5 953.3,569.5 952,571.5 949.8,572.5 945.6,572 942.4,573.1 939.2,572.5 937.3,574.6 935.4,574.6 932.8,576.1ZM928.3,564.9 924.8,565.9 921.6,568 917.5,568.5 915.9,565.9 917.1,563.8 918.4,562.8 918.7,560.1 916.8,558 917.1,554.2 921.3,553.6 921.3,551.4 922.6,548.6 925.5,547.5 929,548.6 930.9,551.4 931.2,553.1 929.3,555.3 929,559 929.6,561.7ZM1367.3,645.5 1369.2,642.8 1372.4,640 1374.4,639.3 1378.8,639.3 1383,639.3 1385.9,634.5 1387.8,631.7 1386.8,634.5 1391.6,632.1 1393.2,629.7 1395.8,625.6 1396.4,621.4 1396.4,618.9 1397.4,616.4 1399.6,615.5 1400.9,615.5 1401.2,619.4 1402.8,623.5 1401.2,628.5 1399.6,628.9 1399.6,633.7 1398.3,636.5 1399.3,638.9 1397.4,641.2 1396.1,642 1395.8,639.3 1393.9,640.8 1392.6,643.2 1391.6,641.6 1390.7,643.2 1386.8,643.2 1386.5,641.6 1386.2,644.3 1384.6,645.9 1383,647.4 1380.7,645.9 1380.7,644.3 1381.7,642.8 1378.8,642.8 1375.6,643.9 1372.1,644.3 1369.2,645.5ZM1367.3,645.9 1369.9,647 1370.5,649.3 1368.9,653.5 1367.6,655.7 1366.7,656.9 1365.1,655.7 1365.1,652.4 1363.8,650.5 1363.5,648.2 1365.7,647ZM1372.4,649.3 1370.8,648 1373.4,645.5 1376.9,643.9 1379.1,644.7 1379.5,646.3 1377.9,648.2 1375.6,647.4 1374,650.5ZM1396.4,615.1 1395.8,610.8 1398,607.3 1400.6,607.8 1401.8,602 1401.8,597.9 1402.5,597.5 1406,601.5 1410.2,604.2 1413.4,602.9 1412.4,605.6 1415,606.9 1410.5,608.6 1407,613 1402.8,610.4 1399.6,611.7 1397.4,611.7 1400.2,613.8 1398.6,614.3ZM1402.8,595.2 1402.8,588.2 1403.4,581 1403.1,571 1401.8,564.3 1402.2,558.5 1404.4,553.6 1406,558 1407,565.9 1408.6,574.6 1411.4,581 1406,580 1404.7,588.2 1407.6,591.5 1407.6,594.3 1405,591.9ZM1335.7,678.6 1337.6,677.5 1338.5,678.6 1337.6,682.1 1335.7,687 1335,689.4 1333.4,687 1332.8,683.9 1334.4,680.7ZM1296.3,698.6 1298.9,695.9 1300.5,695.6 1303.4,695.9 1303.7,697.3 1302.1,700 1299.2,702 1296.3,701ZM1204.6,729.7 1207.1,731.3 1208.7,733.9 1210.3,737.2 1210,740.4 1206.5,742.3 1204.6,741 1203.9,738.8 1203.9,734.9ZM1334.4,701 1338.9,701 1339.8,705 1339.5,708.7 1337.3,711 1337.9,714.3 1340.5,715.3 1344.6,716.6 1345.6,720.6 1343,719.3 1340.5,717.3 1337.3,717 1334.4,716.3 1334.4,714.3 1333.4,713.3 1332.5,711 1331.8,708.4 1333.7,707.4 1333.7,704ZM1350.1,729.7 1352.6,733.9 1353.6,737.8 1352.3,741 1350.4,738.8 1349.7,743.3 1345.9,741.3 1345.3,738.8 1343.3,737.5 1339.2,739.1 1339.5,736.2 1342.1,733.9 1344.6,734.9 1347.5,733.6 1350.1,732.3ZM1346.5,720.9 1350.1,721.2 1350.7,725.2 1349.1,728.4 1347.8,728.4 1346.5,724.8ZM1338.9,723.2 1342.4,724.2 1343.7,726.5 1345.3,727.8 1343.3,731 1341.7,732 1340.1,729.7 1340.8,727.4 1338.5,727.4ZM1333.7,718 1336.3,718 1337.3,720.6 1336,721.9 1334.7,719.9ZM1330.9,724.5 1330.2,727.4 1327,731.3 1323.5,734.2 1324.5,732.6 1328.6,727.4ZM1297.3,756.4 1299.2,754.8 1303.7,756.1 1305,753.2 1310.1,751 1313.3,746.8 1316.5,745.2 1319.7,742 1322.2,738.8 1325.1,740.7 1326.4,742.6 1329.9,744.2 1327,746.8 1325.4,749.7 1325.1,753.2 1328.6,758 1325.4,758.6 1324.5,762.8 1321.3,766 1320.6,770.2 1319.7,772.7 1315.5,774 1314.9,772.1 1310.1,771.8 1306.2,772.1 1301.5,770.5 1300.5,766.3 1297.9,762.8 1297.3,758.6ZM1253.5,743.3 1260.5,744.6 1263.1,747.8 1265.3,750 1269.8,753.2 1273.3,755.4 1276.5,758 1279.7,761.2 1281.3,764.4 1283.9,768.6 1287.7,770.8 1287.1,775.6 1287.1,779.8 1283.2,779.8 1279.7,776.9 1275.9,773.7 1271.7,769.2 1269.8,764.4 1266,760.2 1264.4,755.8 1260.5,752.2 1257.3,749.4 1254.1,745.8ZM1285.1,783 1287.7,780.1 1290.9,780.1 1295.7,782 1302.1,783.3 1303.7,781.7 1309.1,783.3 1314.6,785.9 1314.9,788.8 1309.1,788.2 1302.7,787.5 1297.3,785.9 1293.1,785.9 1289,784.6ZM1335,757 1342.1,758.3 1347.8,756.1 1349.1,756.4 1346.9,759.9 1342.1,759.9 1335.7,759.9 1333.1,761.2 1333.1,764.4 1335,765.7 1337.6,764.1 1343,763.4 1343.3,764.4 1341.4,766.3 1337.9,767.3 1339.8,770.8 1340.8,774 1342.7,774 1341.4,776.6 1340.8,778.5 1337.6,776.6 1335.7,772.4 1335.3,769.8 1333.4,770.5 1333.7,776.6 1333.7,779.1 1330.5,779.1 1330.5,777.5 1330.9,772.4 1328.6,770.2 1329.9,766 1331.8,763.8 1331.8,761.2 1332.5,758.6ZM1367.6,763.8 1372.4,762.5 1377.2,763.8 1377.9,767.6 1378.8,771.8 1382,771.8 1385.2,768.2 1389.4,766 1394.8,768.2 1399.6,769.5 1406,772.1 1411.8,773.7 1415,777.2 1418.8,780.4 1421.3,780.4 1421.3,782.7 1418.8,783 1422,786.9 1425.2,790.1 1428.4,793.3 1430.9,794.3 1428.4,795.3 1423.6,794 1419.4,791.7 1415.6,787.5 1411.8,785.9 1408.6,787.5 1407,790.1 1404.4,790.7 1399.6,790.4 1394.8,787.5 1390,788.2 1392.6,783.6 1391.6,780.4 1388.4,777.2 1383.6,775.6 1378.8,774 1375.6,773.4 1373.4,774 1370.8,770.5 1375.6,769.2 1371.5,768.2 1367.6,765.7ZM1422.9,779.1 1428.4,777.2 1433.2,774.6 1435.7,775 1434.8,778.5 1430,781.1 1425.2,781.1ZM1411.4,903.9 1417.2,905.6 1422.9,904.7 1422.9,909.4 1421.7,914.6 1418.2,916.4 1415.6,916 1413,910.7 1411.4,906ZM1501,878.5 1503.5,880.8 1506.7,883.9 1507.7,887.9 1509.6,886.7 1511.5,890.7 1515.3,892.7 1519.5,891.5 1517.9,895.6 1514.7,898 1514.7,901 1512.2,905.2 1509,907.7 1507.4,906.4 1509,901.8 1507.7,900.5 1504.5,898 1507,896 1507.7,891.9 1506.4,888.3 1502.9,881.6ZM1501,903 1502.9,906 1506.1,905.2 1505.8,908.6 1504.2,911.2 1501.3,915.1 1502.2,917.3 1498.7,918.2 1496.2,920.9 1495.2,924.9 1494.6,926.8 1490.7,930 1487.2,930 1484.3,928.1 1481.1,926.3 1483.7,922.2 1486.6,919.1 1490.7,915.5 1494.9,912.9 1497.1,908.6 1499.4,904.3ZM677.4,689.4 681.8,686 685.3,684.9 689.8,685.3 694.6,687 701,689.8 705.8,691.8 711.6,695.2 707.4,696.3 700.4,696.6 702,693.9 697.8,692.5 694.6,690.1 689.8,689.1 686.6,687.7 684.1,687 681.8,688.4ZM710.9,701 717,700.7 716,698.3 714.1,696.6 718.6,696.6 723.4,696.6 726.6,698.3 730.1,700.7 728.2,701.3 725,701.3 721.8,702 719.9,703.7 717,702 712.8,702.3ZM698.5,701.7 701,701 704.9,702.3 703.3,703.4 700.1,703ZM733.9,701.3 738.7,701.7 738.1,702.7 733.9,702.7ZM759.2,587.7 761.8,583.4 763.4,578.5 766.6,572 771.4,568 769.8,573.6 767.5,577 771.4,576.6 776.1,578.5 779,582.4 777.1,585.8 780.3,587.7 779,591.9 776.1,591 775.5,587.7 772.3,591 769.8,588.7 765,587.7ZM988.4,629.7 991.6,628.9 998.7,628.5 997.1,632.5 997.1,634.9 993.6,633.3 988.8,631.3ZM975,617.2 978.2,616 980.1,619.4 979.5,624.8 977.6,625.6 975.7,625.6 975.7,620.2ZM978.9,608.6 979.2,613 978.2,615.5 976.3,613 976.6,610.4ZM1023.9,639.7 1027.1,640 1032.9,640.4 1032.6,641.6 1027.8,642 1023.9,640.4ZM1052.1,641.6 1054.3,640 1059.4,638.9 1057.2,641.6 1054.3,643.2ZM982.4,322.1 990.4,316.7 1000,314.9 1006.3,322.1 1011.1,332.5 1017.5,335.8 1009.5,343.8 1007.9,356.1 1003.2,368.9 998.4,363.3 992.9,356.1 992,345.4 984,335.8ZM1006.3,314.9 1012.7,307.4 1022.3,307.4 1035.1,313.1 1031.9,325.6 1020.7,327.4 1009.5,323.9ZM1015.9,356.1 1020.7,343.8 1027.1,351.6 1022.3,359ZM1113.5,428.7 1116.7,418.4 1119.9,409.7 1124.6,401.7 1127.8,389.8 1135.8,379.6 1147,373 1159.8,364.7 1168.8,364.7 1166.2,374.3 1153.4,382.2 1143.8,391 1137.4,401.7 1132.6,413 1129.4,423.6 1132.6,436.6 1126.2,437.6 1119.9,435.7ZM1254.1,332.5 1258.9,314.9 1254.1,295.5 1262.1,291.4 1271.7,314.9 1282.9,332.5 1284.5,343.8 1276.5,348.5 1268.5,340.7 1265.3,348.5 1258.9,335.8ZM1388.4,387.3 1391.6,377 1401.2,375.7 1410.8,383.5 1409.2,391 1399.6,392.2 1393.2,393.4ZM1396.4,408.6 1401.2,402.9 1407.6,407.5 1404.4,410.8 1398,410.8ZM1417.2,389.8 1423.6,384.8 1430,389.8 1426.8,393.4 1418.8,392.2ZM1520.1,432.7 1524.3,428.7 1530.7,428.7 1532.3,433.7 1525.9,435.7 1521.1,434.7ZM753.1,955 758.6,952.9 764,954.4 760.8,958.1 755.4,957.5ZM1314.9,787.5 1317.1,787.2 1318.7,788.2 1317.1,789.4ZM1319.7,788.2 1321.9,787.8 1321.6,789.8 1319.7,789.4ZM1322.2,788.5 1324.8,787.5 1327,787.8 1329.6,787.8 1329.6,789.4 1326.7,789.8 1323.5,790.1ZM1332.1,788.2 1335.7,788.2 1338.9,788.2 1342.1,787.5 1341.4,789.1 1337.3,789.8 1332.5,789.4ZM1329.3,791.7 1332.5,791.1 1335,793 1333.4,794.3 1329.9,792.7ZM1343.7,794.3 1345.3,791.4 1348.5,789.8 1353.2,788.2 1355.8,788.2 1353.2,790.4 1348.5,793 1345.3,794.3ZM1356.4,758 1357.7,754.2 1358.7,756.7 1360.6,756.4 1358.7,758.6 1360.9,760.2 1358,759.9 1359.3,763.8 1357.4,762.2 1356.8,759.6ZM1357.7,771.4 1361.2,770.2 1366,770.8 1367.3,772.7 1362.8,772.4 1358.7,772.4ZM1351.7,771.4 1354.5,771.1 1355.5,772.7 1353.2,773.7 1351.7,772.7ZM1430.6,769.5 1434.1,770.8 1437.3,774 1438.3,776.2 1436.7,775 1433.5,772.1ZM1443.1,778.5 1446,780.4 1447.6,783 1445.6,783 1443.7,780.4ZM1458.8,791.1 1461.3,791.4 1462.9,793 1460.4,793ZM1462.3,787.8 1464.5,790.7 1463.6,791.4 1462.3,789.4ZM1473.1,826.8 1477.9,829.9 1482.7,834.4 1481.1,834.4 1476.3,831.3 1473.1,828.2ZM1515.7,818.4 1518.5,817.4 1520.1,819.7 1517.3,820.7 1515.7,819.7ZM1481.5,809.7 1483.4,810.4 1483.4,812 1482.1,811.7ZM450,696.6 451.3,694.9 453.9,697.6 451.3,699.6ZM447.8,692.8 450,692.8 449.4,693.9ZM442.7,690.4 444.6,690.8 443.6,691.5ZM453.9,535.4 459.6,532.4 462.2,535.4 458,539.5 454.8,538.3ZM538.3,572 539.9,575.6 544.4,579 547.5,581.5 550.7,583.4 554.3,584.4 553.6,581.5 549.8,578 548.2,575.6 544.4,573.6 541.2,571.5ZM523.6,554.2 527.7,555.3 527.4,560.6 529.6,565.9 525.8,561.7 523.6,558ZM750.9,726.8 754.1,726.5 753.8,728.7 750.9,728.7ZM698.5,678.3 700.1,679.7 700.7,682.1 698.8,681.1ZM670.6,483 677,478.3 681.8,478.3 688.2,489 692.4,494.1 686.6,494.8 681.8,492.7 675.4,497.7 670,495.6 673.8,490.5ZM683.4,500.5 688.2,500.5 694,504.7 686.6,505.4ZM692.1,504 694.6,505.4 694.3,509.5 692.1,508.1ZM686.6,559.6 690.5,560.6 689.8,562.2 686.6,561.2ZM742.6,576.6 749,578 751.5,580.5 745.8,579.5ZM742.9,591 747.4,592.9 750.6,593.3 748.7,595.2 744.2,593.3ZM1119.2,720.6 1123,720.6 1122.4,721.6 1119.5,721.6ZM1092.7,303.5 1100.7,297.6 1110.3,299.6 1105.5,309.3 1097.5,309.3ZM1115.1,309.3 1124.6,297.6 1132.6,299.6 1139,307.4 1127.8,313.1 1118.3,314.9ZM1124.6,291.4 1134.2,278.4 1142.2,285 1134.2,293.5ZM1142.2,297.6 1150.2,289.3 1156.6,295.5 1150.2,303.5 1143.8,305.5ZM1168.8,941.9 1171,940.4 1173.6,942.4 1172.3,944.4 1170,943.9ZM827.3,967.1 832.1,967.7 834.3,971.5 831.1,970.4ZM956.2,623.1 958.7,621.9 960,622.7 958.4,624.4ZM984,545.8 986.5,543.5 989.1,544.1 989.1,547 987.8,549.8 984.9,548.6ZM980.1,547 982.4,546.4 983.3,548.6 981.4,549.8ZM1006.7,537.1 1008.9,533 1009.5,534.8 1007.6,538.3ZM1019.1,530.6 1021.1,528.7 1023.3,529.3 1022.3,531.2 1019.8,532.4ZM1019.8,526.9 1022,525.6 1022.3,527.5ZM1011.5,518.7 1013.7,517.4 1014.3,519.3ZM1023,626 1025.9,627.2 1027.5,629.7 1025.9,628.9ZM1037.7,636.5 1039,636.1 1038.6,637.7ZM1031.6,624.8 1033.5,624.4 1033.2,625.6ZM1414.3,605.1 1417.2,602 1415.3,602.9ZM1418.8,600.6 1424.5,597.5 1422,598.8ZM1445,575.6 1447.9,572 1446.9,575.1ZM412.3,559 417.1,555.3 415.5,558ZM407.8,561.7 411.7,558 410.4,560.6ZM390.9,565.4 395.7,563.8 392.5,565.9ZM380.3,567.4 384.8,565.9 382.9,568ZM399.5,497 405.3,494.8 409.1,497.7 403.7,499.8ZM413.6,518.7 418.1,518 419,520.6 414.9,521.2ZM411.3,480.6 422.9,473.6 430.8,475.2 424.5,469.5 415.5,458.6 418.1,453.3 430.8,440.5 448.4,429.7 462.8,435.7 475.6,439.5 498,447 514,452.4 520.4,447.9 523.6,447.9 539.6,438.6 549.1,447.9 561.9,445.2 574.7,453.3 581.1,462.9 597.1,462 603.5,456.8 603.5,471.1 613.1,461.2 629.1,462.9 635.5,456.8 641.9,447.9 646.7,423.6 654.7,447.9 661,456.8 670.6,465.4 677,445.2 688.2,447.9 688.2,469.5 673.8,473.6 670.6,481.4 657.9,496.3 651.5,510.1 646.7,519.9 647.6,527.5 653.1,538.3 664.2,539.5 677,548.1 685.7,549.2 686.6,560.6 691.4,569.5 696.2,568.5 696.9,560.6 694.6,551.4 702.6,545.3 704.2,538.3 697.8,527.5 701,519.9 699.4,504.7 712.2,504.7 720.2,512.1 726.6,513.5 725,526.2 731.4,529.3 737.8,527.5 741.9,518 749,532.4 753.8,544.1 763.4,552.5 769.8,558 770.7,565.9 766.6,568.5 757,575.1 744.2,574.6 736.2,575.1 729.8,581 725,588.2 721.8,591.5 728.2,585.8 737.8,580 743.2,582 741,586.8 741.6,593.8 744.2,595.2 750.6,596.1 757,590.5 757,596.1 753.1,598.4 745.8,601.5 739.4,606.4 737.1,604.2 742.6,598.4 737.8,598.8 734.6,600.6 728.2,604.2 724.4,606.4 722.8,610.4 725,613.8 721.8,615.1 717,616.4 712.2,618.9 712.2,622.3 709,626 707.4,623.5 708.7,628.5 705.8,633.7 707.4,640.8 704.2,642.8 699.4,645.9 695.6,648.6 689.8,653.1 688.5,658.7 691.1,666.1 693,672.2 692.4,677.5 689.8,677.9 687.3,674.4 684.4,668.6 684.1,664.2 680.2,660.6 675.4,661.7 672.2,659.1 667.4,659.5 662.6,659.8 663.6,663.9 659.5,663.9 656.3,662.4 649.9,661.7 645.7,663.1 640.3,666.8 637.7,669.7 638,675.1 636.4,682.1 636.1,688 641.2,698.3 645.1,700.7 647.6,702 653.1,700.7 657.9,699.6 659.5,695.9 659.8,692.5 665.8,690.8 670.6,690.8 669,696.6 668.1,701.7 666.5,704.4 664.6,709.7 667.4,710.4 673.8,709.7 680.2,710 682.8,712.7 681.2,719.3 681.2,725.8 683.4,729.1 686.6,732.3 689.8,733 693.3,731.3 696.2,730.7 701,733.6 701.7,735.5 698.8,737.2 697.8,733.9 694.6,732.3 692.1,734.9 691.4,737.8 687.6,736.8 684.1,734.9 681.5,733.9 677.4,729.7 674.5,729.1 674.5,725.5 669,719.6 668.4,718.3 662.6,717.6 656.3,716 651.5,711.7 646.7,708.7 641.9,710.4 635.5,708.7 629.4,706.7 622.7,702.7 616.3,699.3 611.2,694.6 612.1,690.8 608.6,684.9 603.5,678.6 599,675.1 595.5,668.6 590.7,664.2 587.5,656.9 582.1,654.2 582.7,658.7 587.5,666.1 590.7,671.5 593.9,676.8 597.1,682.1 597.4,686 595.5,683.9 590.7,679.3 590.1,675.1 584.3,671.5 581.1,668.6 583.7,666.1 578.6,659.5 575.7,653.9 574.1,650.5 569.9,645.5 563.5,643.6 559.1,635.7 557.1,630.5 553,623.5 551.1,619.8 551.7,613 550.7,608.6 552.3,595.2 550.1,583.9 557.1,585.8 555.5,581 550.7,576.1 542.8,571 539.6,563.3 533.2,555.3 532.2,552.5 530,547 525.2,541.2 520.4,532.4 514,530.6 507.6,526.2 501.2,521.9 488.4,519.9 482,514.8 475.6,514.8 474,519.9 469.2,524.4 463.1,525 464.1,519.9 465.1,516.1 468.3,512.8 469.5,511.5 466.3,512.1 463.5,514.8 460.9,518.7 458.7,523.8 456.4,526.9 455.5,531.2 451.6,534.8 448.1,538.9 442.4,543 435.6,547.5 429.3,549.8 421.9,552 427.7,548.1 434,544.7 438.8,541.2 441.4,538.3 444.9,534.2 445.6,530.6 446.8,527.5 440.4,528.7 430.8,526.2 430.8,519.9 424.5,519.9 419.7,513.5 418.1,506.8 421.3,499.8 427.7,498.4 434,492.7 434,488.2 427.7,489 419.7,489ZM701.3,733.3 703.3,735.5 705.8,731.3 707.4,727.4 709.6,725.8 711.6,724.8 715.4,724.2 718,722.9 720.5,721.2 720.8,723.2 718.9,725.2 719.9,727.4 721.5,726.1 724.4,723.9 725,721.9 726,724.2 730.1,725.2 730.7,727.1 734.6,727.1 737.8,727.1 741,728.7 743.5,727.4 747.4,726.8 750.6,726.8 749,728.4 752.2,729.7 754.4,732.3 757,733.9 760.2,735.5 762.7,739.4 765.9,742 772.3,742.3 776.1,742.6 781.6,745.5 783.8,747.8 785.7,751.6 788.9,755.4 788.9,759.6 787.3,761.8 793.7,761.8 795.3,763.4 798.5,763.4 803.3,765.7 807.2,769.2 811.3,768.9 816.1,770.5 820.9,770.2 825.7,773 829.5,776.2 833.7,777.5 835.9,778.2 836.9,782 837.5,784.3 837.2,787.2 835.6,790.7 832.4,795 830.5,796.6 827.9,800.8 825.7,803.1 824.1,806.4 824.1,813 823.5,819 821.9,823.1 820,827.5 817.7,831.6 817.7,833.3 814.5,836.4 810.7,836.8 805.9,837.8 800.8,840.3 795.7,843.8 793.7,846.3 793.4,850.9 793.4,855.6 789.9,859.3 788,863.7 785.1,867.4 782.2,870 778.1,875.8 776.1,878.8 773.3,880.8 769.1,880.4 764,878.8 762.1,876.9 762.1,879.2 765.9,882.7 765.6,885.5 767.5,886.3 765,892.7 760.2,895.6 752.2,896.8 749.9,896 749.6,903 744.8,906 741,904.3 741,909.4 745.1,909.9 745.5,912.9 741.3,912.9 741,915.1 739.4,921.8 734.6,923.6 733,927.2 736.2,931.9 738.4,935.6 733,941.4 729.8,947.3 728.2,951.4 730.1,958.1 729.5,960.2 730.7,963.4 733,967.1 736.2,969.9 740.3,971 736.2,972.6 731.4,973.8 726.6,974.3 721.8,971.5 718.6,968.2 713.8,962.8 710.6,959.1 709,951.4 707.7,943.9 707.4,936.6 707.4,930.9 710.6,926.3 713.8,920.4 715.4,913.8 712.2,914.6 711.6,909.4 712.8,905.2 713.8,901 713.8,894.8 713.5,889.5 715.1,887.5 716.4,882.7 719.2,876.9 719.9,873.1 720.2,867.4 720.5,861.8 720.5,856.3 722.1,850.9 723.1,845.2 723.7,838.9 724.4,833.3 724.7,827.2 724,821.4 720.8,818.4 716.4,815.4 712.2,813 708.4,810.7 704.9,806.4 704.5,804.1 702.3,799.9 700.4,796.6 698.5,793.3 697.5,790.1 695.6,786.9 693.3,783.3 690.8,781.1 689.5,780.1 688.9,776.2 691.4,772.4 693,771.4 693.3,769.2 690.1,768.6 690.8,764.4 692.7,761.2 694,758 696.5,756.1 698.8,752.9 701,750 701.3,746.8 701,743.3 701.3,740.4 699.7,738.1 698.8,736.8 699.4,734.6Z" fill="#0a0a0a" stroke="#0a0a0a" stroke-width="0.6" stroke-linejoin="round"/>
<path d="M1098.1,601.5 1100.7,597 1103.9,593.8 1107.1,592.9 1111.9,590.5 1116.7,591 1118.9,593.3 1118.3,598.4 1113.5,598.8 1111.9,602 1109.6,602 1111.5,605.1 1113.5,607.8 1117.6,610.8 1117.3,614.3 1121.5,613 1123.7,616 1121.5,618.1 1117.9,617.2 1117.6,621.4 1120.2,624.4 1121.1,629.7 1120.8,633.7 1115.1,634.9 1111.9,634.5 1108.7,632.1 1105.5,631.3 1105.1,628 1106.1,624.4 1107.1,620.6 1109.9,620.2 1107.1,618.5 1105.5,615.1 1103.2,612.1 1100.7,608.6 1100.7,605.1Z" fill="#262626"/>
<path d="M1280.4,568.5 1283.9,568.5 1289.3,564.3 1295.1,559 1299.2,552.5 1300.5,545.8 1297.9,545.8 1296,552 1291.9,558 1286.1,563.3 1281.3,566.4ZM1183.8,597.9 1187,599.7 1191.8,594.3 1198.2,594.3 1202,592.4 1199.8,591 1193.4,591.5 1188.6,591.9 1185.4,594.3ZM1045.4,520.6 1047.9,519.9 1052.7,518.7 1054.3,514.8 1052.7,511.5 1047.9,508.8 1044.7,511.5 1044.1,514.8 1046.3,518ZM1059.1,514.1 1063.3,513.5 1064.5,508.8 1062.3,503.3 1059.1,501.2 1058.1,506.8 1060.7,510.1ZM1050.5,763.8 1052.7,760.6 1056.9,759.9 1059.1,762.2 1057.8,765.4 1055.9,768.6 1053.7,770.2 1050.5,769.2 1050.2,766ZM1041.8,772.1 1043.8,772.7 1044.4,777.2 1046,782 1048.6,787.5 1047,789.1 1044.7,785.2 1042.8,780.4 1042.2,775.6ZM1057.2,791.7 1059.1,792.4 1060.1,798.2 1061,803.1 1061.3,807.4 1059.7,807.1 1058.8,801.5 1057.8,796.6ZM549.1,483 555.5,485.2 561.9,485.2 566.7,479.1 572.2,475.2 571.5,469.5 565.1,470.3 560.3,473.6 555.5,475.9 550.7,477.5ZM574.7,513.5 581.1,514.1 585.9,512.1 590.7,508.8 598.7,503.3 598.7,500.5 592.3,502.6 585.9,505.4 579.5,506.8 576.3,510.1ZM593.9,528.1 598.7,526.2 606.7,525 609.9,523.8 606.7,523.1 598.7,523.8 593.9,525.6ZM632.9,574.1 639.3,573.6 640.3,568.5 637.1,563.3 636.1,556.9 631.6,556.4 632.9,561.7 635.5,566.9 632.9,570ZM654.3,591.5 659.5,592.4 665.8,591.5 670.6,592.9 677,592.4 678.6,590.5 677,586.3 672.2,582.4 665.8,581.5 662.6,585.8 657.9,589.1ZM668.1,613 671.9,613.8 673.2,608.6 672.6,602 677,596.6 673.8,595.6 669,598.4 667.4,601.5 668.7,606.4ZM678.3,595.6 681.8,595.6 686.6,595.2 692.4,597.5 693,601.5 688.2,602.9 687.6,607.3 685,608.6 681.8,605.1 682.5,599.7ZM682.2,613.8 686.6,615.1 693,612.1 696.5,609.5 694.6,609.1 689.8,609.9 685,612.5ZM693.7,607.3 699.4,607.3 704.9,606 704.9,603.8 701,604.2 696.2,605.1ZM725,811 727.2,811.7 728.8,814.4 726.6,814ZM1063.3,746.5 1064.9,747.4 1066.1,752.2 1064.5,753.2 1063.9,749.7ZM1192.4,611.2 1196.6,609.9 1199.1,610.4 1196.6,612.1 1193.4,612.1ZM1134.9,598.8 1138.4,594.3 1142.2,591.9 1145.4,592.9 1143.2,597 1139,600.6 1135.8,602.9ZM988.4,528.7 991,524.4 993.6,526.2 991.6,529.3ZM619.5,541.8 623.3,540.7 624.3,533.6 621.1,532.4 619.5,537.1ZM663.6,579 667.4,578.5 666.8,574.6 664.2,575.1Z" fill="#1a1b1c"/>
<path d="M941.8,641.2 943,644.3 943.4,649.3 945,652.4 937.3,654.6 937,657.2 932.8,660.6 927.4,662.4 921,665.3 921,670.4M921,669 906.6,669.0M921,670.4 921,675.1 910.4,675.1 910.4,684.2 907.2,685.6 907.2,691.5 894.4,691.5M921,670.4 933.5,678.6M933.5,678.6 928,678.6 931.2,711 918.4,711 914.6,711.4 912,710.7 909.8,713.3M933.5,678.6 952.3,692.2 952.6,693.5 958.4,699 962.2,699.0M962.2,699 967.3,697.6 972.8,692.8 987.2,683.9M987.2,683.9 985.9,681.1 981.7,680 978.9,674.4 980.5,671.5 980.5,666.8 980.1,662.8 979.2,659.8M979.2,659.8 977.9,652.7 975.3,651.2 973.4,648.6 972.8,645.1 975.3,642.8 975.3,635.7 976.3,634.1M979.2,659.8 981.7,657.2 980.8,653.9 982.7,653.1 985.6,651.6 985.9,648.9M1028.7,654.6 1028.7,689.1M1028.7,689.1 1066.8,689.1M1028.7,689.1 1028.7,695.9 1025.5,695.9 1025.5,697.6M1025.5,697.6 1000,683.9 996.8,685.6 994.2,687 987.2,683.9M996.8,685.6 998.4,692.5 998.7,696.3 998.4,706.4 992,714.3 992,717.3M1025.5,697.6 1025.5,710.4 1022,711 1019.1,719.3 1020.7,724.2 1022,725.8M1022,725.8 1024.6,729.4 1028.7,728.1 1035.1,730.4 1043.1,729.1 1052.4,723.5 1054.9,728.4 1057.8,730.7M1065.2,714.7 1064.2,720.3 1061,723.2 1058.5,727.1 1057.8,730.7M1072.2,702.7 1067.1,706 1065.2,714.7M1065.2,714.7 1070,713 1073.5,714 1079.2,715.7 1084.4,720.9M1084.4,720.9 1082.4,725.8 1086,726.1 1086.9,724.2M1086,726.1 1089.5,732.3 1099.1,735.5 1102.3,735.5 1092.7,745.2 1086.3,746.5 1082.8,748.7M1082.8,748.7 1076.7,747.8 1075.1,750.3 1070.6,749.7 1063.9,747.1 1060.7,744.2M1082.8,748.7 1079.9,752.2 1079.9,761.2 1081.8,766.6M1074.1,776.2 1069,770.8 1057.5,764.4 1046.3,764.7M1057.5,764.4 1057.5,760.6 1059.1,757.7 1060.7,755.1 1058.8,749.4 1057.5,747.8M1060.7,744.2 1057.5,739.4 1054.3,736.2 1057.8,733.6 1057.8,730.7M1047.3,750 1051.1,749.7 1057.5,747.8 1060.7,744.2M1036.4,744.9 1039.6,747.4 1043.1,746.5 1047.3,750.0M1022,725.8 1023.9,733.3 1026.2,734.6 1028.7,737.2 1033.2,740.1 1036.4,744.9M998.4,737.2 1001.6,736.5 1008.3,735.5 1009.5,732.3 1014,732 1018.2,727.1 1022,725.8M1008.3,750 1008.3,747.4 1011.1,744.9 1020.4,748.1 1022,745.8 1026.8,744.9 1029.7,745.2 1036.4,744.9M998.4,737.2 995.2,742 995.5,746.8 1000.6,754.2M993.9,719.6 996.8,722.5 996.8,729.1 993.6,729.4 998.4,737.2M993.9,719.6 995.2,724.2 991,729.1 988.8,733.9 986.5,738.8 982.4,739.1 978.5,741 976.3,745.8M960.3,723.5 961.9,717.6 966.4,716.3 971.2,719.3 977.6,719.9 982.4,718.3 988.8,718.9 992,717.3 993.9,719.6M1000.6,754.2 991.3,754.2 984.9,754.2 980.1,753.8M984.9,754.2 984.9,758 980.1,758.0M991.3,754.2 991,757 994.8,757 993.2,761.2 995.2,763.1 994.8,767.3 990.4,768.9 988.8,768.6 985.9,770.2 986.8,772.7 984.3,773.7M1008.3,750 1006.7,753.5 1006,758 1005.4,762.8 1000.6,767.6 1000,772.4 997.4,775 994.8,776.9 990.7,775.9 989.7,777.2 987.8,779.8M1000.6,754.2 1001.6,751 1008.3,750.0M1047.3,750 1047.9,753.8 1048.9,754.5 1044.7,758.6 1043.8,761.5 1043.4,765.7M1043.4,765.7 1046.3,764.7 1047.3,768.6 1044.4,769.8 1041.5,769.8 1042.2,766.3 1043.4,765.7M1041.5,769.8 1042.5,775.3 1044.7,775 1047.3,771.8 1047.3,768.6M1042.5,775.3 1043.4,782 1047,787.5M1047,787.5 1054,791.4 1057.5,791.7 1060.4,798.5M1054,791.4 1055.3,798.5 1053.3,805.1 1054.9,806.4M1060.4,798.5 1059.4,804.8 1063.3,808.7 1063.3,813 1061.7,816.7 1058.5,813 1059.1,808.1 1054.9,806.4M1054.9,806.4 1045.4,809.7 1046,811.7M1047,787.5 1041.2,788.5 1039.6,791.1 1040.2,799.9 1044.1,800.5 1044.1,804.4 1039.6,801.5 1035.8,798.5 1029.7,797.2 1026.8,797.9 1025.5,796.3M1025.5,796.3 1020.1,797.2 1019.8,793 1018.5,784.6 1011.1,783.6 1009.5,786.9 1005.1,787.2 1001.9,780.1 991.6,780.1 988.1,780.4M1025.5,796.3 1025.5,803.1 1019.1,803.1 1019.1,813.7 1023.6,818.4M986.5,817.4 992,816.4 994.2,817.7 1007.6,817.7 1017.2,819.7 1023.6,818.4 1029.7,819.0M1029.7,819 1023.6,819.7 1015.9,820.7 1015.9,833.3 1012.7,833.3 1012.7,843.1 1012.7,856 1004.4,857.1 1001.6,856.7M1012.7,843.1 1015.3,850.2 1019.1,849.5 1022.3,844.9 1030.6,845.9 1034.8,839.2 1039.3,835.4 1042.8,834 1048.9,834.7M1042.8,834 1037.4,828.2 1032.6,823.1 1029.7,819.0M1029.7,819 1035.1,819.7 1041.2,813 1046,811.7M1046,811.7 1048.9,813 1054,815.4 1054.3,819.7 1053.3,823.1 1054,826.5 1052.4,830.9 1048.9,834.7M1048.9,834.7 1051.1,842 1050.8,847 1051.4,850.2 1054,850.6M1050.8,847 1047.9,847.3 1047.3,850.2 1048.9,852 1051.1,851.6 1051.4,850.2M1035.1,860.4 1037.4,857.8 1040.6,856.7 1042.8,859.3 1042.2,861.5 1039,864 1036.4,862.9 1035.1,860.4M1078,795 1071.9,797.9 1065.5,798.9 1060.4,798.5M896,709 902.4,707.4 906.3,710 909.8,713.3 912.4,721.2M912.4,721.2 905,720.6 900.8,720.3 895.4,721.2M895.1,717.3 904.7,717.6 904.7,718.3 895.1,718.9M905,720.6 905,723.5 900.8,725.8M912.4,721.2 919.1,720.9 921.9,724.5 923.2,728.4M906.3,732.3 913,729.1 915.9,733.9 915.9,734.9 912,739.1M915.9,734.9 918.7,737.5 921.6,736.8M923.2,728.4 922.3,733.9 921.6,736.8 921.9,740.4 924.8,742.3 924.8,747.1M923.2,728.4 929,726.8 931.2,727.8M931.2,727.8 931.2,723.2 934.7,720.3 936,717.6 939.8,715.7 942.4,715.3 946.6,712.7 949.4,712.7M949.4,712.7 952,712.7 960,711.4 962.2,706.4 962.2,699.0M931.2,727.8 933.8,730 940.2,730.7M940.2,730.7 939.8,725.8 948.8,725.5 951.7,725.8 956.5,722.9M940.2,730.7 940.5,735.5 938.6,739.7 939.8,744.9M948.8,725.5 950.1,729.1 950.7,734.9 950.4,738.8 952.6,741.7M951.7,725.8 953.3,731.3 953.9,741.0M956.5,722.9 955.8,720.6 952,718.3 949.4,712.7M956.5,722.9 960.3,723.5 960.3,729.1 957.4,735.9 957.4,740.7M554.6,581 644.4,581 644.4,579 646.3,582.4 651.5,582.9 656.3,585.3 662.3,585.8 666.2,584.4 677.4,591 679.9,592.9 681.5,594.7 685,598.4 685.3,608.6 683.1,612.1 685,614.3 696.2,609.5 695.9,607.3 697.2,606 704.2,604.2 709,600.2 710,599.7 720.2,599.7 722.4,597.9 724,594.3 725,591.9 727.6,588.7 730.4,588.7 732,590.1 732,596.6 733.3,598.8 734.6,600.2M498,447 498,518 504.1,519.3 509.2,526.2 512.4,523.1 515.6,521.2 520.4,526.9 522.3,529.9 527.4,540.7 533.2,544.1 533.2,548.1M574.4,651.2 582.1,650.5 593.6,655.7 602.9,655.7 602.9,653.9 608.3,653.9 614.7,662 619.2,664.2 621.1,661.3 624.6,661.3 629.1,667.2 630.7,669.7 632,673.6 638,675.4M654,714.3 654,711.7 655.6,709 659.8,709 659.8,708 656.6,705.4 657.9,703.4 663.6,703.4 666.5,701.0M663.6,703.4 663.6,709.7 664.6,709.7M666.8,710.4 663.6,713 663,714.7 660.7,717.0M663,714.7 665.8,716.3 668.1,718.0M669.7,719.3 671.6,716.6 674.5,716.3 677.4,713.3 682.8,712.7M674.8,725.5 678,725.8 681.2,726.1M683.8,735.5 683.8,732 684.7,730.4M701.3,733.3 699.7,738.1M719.2,696.9 719.6,700 718.6,700.7 719.6,702.7M720.8,723.2 717,725.5 715.4,731.3 717.3,734.2 717.3,737.5 718.9,738.8 724.7,738.8 726.9,741.7 733,741.3 732,744.2 732,747.8 733.6,750.3 731.7,752.2 733.9,753.8 734.9,757.4M734.9,757.4 734.3,755.8 725.6,755.8 725.6,757.7 727.6,758 726.9,762.8 725,761.8 726.9,764.7 725.3,774.6M725.3,774.6 722.8,773.4 725,769.8 715.7,768.9 713.2,765.4 708.4,761.5 704.9,759.9 701.3,759.9 696.5,756.7M708.4,761.5 707.1,766 703.9,769.5 700.1,770.8 698.1,772.1 697.2,775.9 696.2,777.2 694.3,775.6 691.7,775.3 692.1,772.1M725.3,774.6 722.4,774.6 715.7,777.5 714.8,780.7 712.2,784.9 715.4,790.1 717.6,791.7 718,793.3 723.1,791.7 723.1,796.6 726.3,796.3M726.3,796.3 729.2,801.5 728.2,805.4 728.2,809.1 726.9,811.4 728.2,813.7 726.3,817.4 726.6,818 723.7,820.7M726.6,818 728.5,823.1 729.8,826.5 730.7,831.6 731.7,836.1M726.3,796.3 731.4,795.6 739.7,792.4 740,798.2 743.2,801.5 748,803.1 753.8,804.8 756.3,809.7 756.3,814 762.1,814 762.4,817.4 765,820.4 764,823.1 762.7,825.8 762.7,827.2M762.7,827.2 759.8,824.1 751.5,825.1 749.6,828.2 748.7,834.0M748.7,834 743.2,833.3 743.2,836.1 740.3,833.7 736.8,832.6 733.9,836.1 731.7,836.1M731.7,836.1 733.6,840.3 730.1,842 729.8,848.4 726,856.3 725,863.3 723.4,866.3 724.7,873.5 725.6,877.7 723.7,881.6 723.7,885.1 721.5,887.5 722.4,895.2 719.6,899.3 719.6,909.4 718.3,910.7 719.6,916 719.6,921.8 720.8,924.9 719.2,930.5 717.6,933.7 717.6,938 713.8,942.9 715.4,949.9 717.6,949.9 717.6,955 718.9,956.5 725.3,956.5 730.1,958.1M729.5,960.2 729.5,972.1M748.7,834 753.8,839.6 760.8,843.1 764.6,844.9 761.4,851.3 768.5,852.3 770.4,852.3 774.2,845.9M762.7,827.2 763.7,833.7 770.4,834.4 771.7,840.3 775.2,840.3 774.2,845.9M774.2,845.9 776.8,847.3 777.1,850.6 770.7,855.2 764.6,862.6M764.6,862.6 762.7,869.3 762.1,876.5M764.6,862.6 769.8,864.8 771,865.2 775.5,868.9 778.1,871.9 778.1,875.8M734.9,757.4 739.4,758.6 744.2,755.1 743.2,748.1 748,749.4 748,748.1 753.8,746.8 754.7,744.6M754.7,744.6 752.5,742.3 753.4,739.7 756,738.4 757,734.2M754.7,744.6 757,745.2 758.2,748.4 757.3,753.8 760.2,757 765.6,754.8 768.2,755.1M765.9,742 765.6,745.2 763.4,748.4 765.9,750.6 768.2,755.1M776.1,742.6 774.9,745.5 776.1,749.7 774.2,753.8M768.2,755.1 770.1,753.2 774.2,753.8 779.7,754.2 783.5,748.4M1081.5,615.1 1087.9,616.8 1088.5,621 1092,622.7 1089.5,623.9 1091.1,628.5 1092,632.9 1084.4,633.3 1070.3,634.5 1066.1,634.5 1064.5,637.7 1063.6,638.1M1076.7,606.9 1086.3,609.1 1092.7,609.9 1097.2,613.4 1104.2,613.8M1087.9,616.8 1092.7,616.4 1097.2,613.4M1092.7,616.4 1097.5,623.5 1097.5,626.0M1092,622.7 1097.5,626 1102.3,622.7 1105.1,628.0M1084.4,633.3 1080.5,642.4 1072.9,647.8 1063.9,650.8 1062.9,650.5M1072.9,647.8 1074.1,652.4 1067.1,655 1070.3,658.7 1068.7,660.6 1063.9,663.5 1060.7,662.8M1060.7,662.4 1062.3,655 1062.6,650.5 1063.6,648.2M1060.4,662.4 1058.5,655.7M1061,648.9 1063.6,648.2 1065.8,644.7 1063.9,643.2M1092,632.9 1094,637.7 1095.9,641.2 1094,645.5 1096.2,648.9 1101.6,653.9 1104.2,660.6M1074.1,652.4 1083.1,656.5 1091.7,663.5 1097.5,663.9 1101.3,660.2 1102.3,660.6M1097.5,663.9 1100.7,666.1 1103.5,666.1M1085.6,708 1086.9,704.7 1091.1,704.7 1097.5,705.4 1100.7,706 1105.5,700.7 1115.1,699.3M1115.1,699.3 1124.6,695.9 1126.9,689.1 1125.3,686.6 1117,686 1113.8,681.8M1115.1,699.3 1118.6,707.4M1125.3,686.6 1127.8,682.1 1129.1,679.0M1121.1,632.5 1124,632.1 1128.8,629.3 1132,628.9 1138.4,631.7 1144.5,635.3 1144.5,639.3M1144.5,639.3 1142.2,643.6 1143.5,647.4 1142.6,653.1 1146.4,655.4 1143.5,660.9M1143.5,660.9 1146.4,665.7 1149.6,667.2 1151.2,670.8 1149.6,672.9 1145.7,677.9M1143.5,660.9 1148.6,662.8 1153.7,662.8 1160.8,660.9 1161.1,657.2 1166.2,654.6 1170.4,653.5 1171,648.9 1173.6,648.2 1176.1,645.1 1177.7,640.8 1177.7,636.5 1187,633.7 1188.3,632.9M1144.5,639.3 1150.2,640 1155,636.5 1159.8,632.1 1165.6,632.9 1166.2,633.7 1171,631.3 1173.2,631.3 1177.4,628.5 1177.7,634.9 1188.3,632.9M1166.9,683.2 1175.8,680.7 1172.6,672.9 1173.2,667.9 1181.9,664.2 1183.5,660.9 1187.6,656.5 1189.9,652 1185.4,648.6 1186.4,642.4 1197.5,639.7M1188.3,632.9 1197.5,639.7 1201.1,644.3 1203,650.5 1200.4,655 1208.1,659.8 1217.4,664.6 1223.8,667.9 1230.5,668.2M1208.1,659.8 1204.9,665 1211,668.2 1219.3,670.4 1230.5,673.6 1230.5,668.2 1232.7,670.4M1232.7,670.4 1236.2,666.8 1242.9,668.6 1242.9,671.8 1235.9,672.6 1232.7,670.4M1242.9,668.6 1249.3,664.2 1255.7,662.8 1259.9,666.8M1230.5,673.6 1233.4,674 1235.9,677.5 1244.2,678.3 1243.9,681.1 1240.4,683.2 1241.3,685.6 1243.9,683.2 1244.9,691.5 1243.9,693.5M1230.5,673.6 1230.5,678.6 1232.7,681.1 1232.7,689.1 1233.7,690.1M1244.9,691.5 1246.8,685.6 1251.6,676.8 1253.2,672.6 1259.9,666.8M1259.9,666.8 1264.4,669.7 1264.4,675.4 1260.8,680.7 1265,684.9 1266,688.7 1272.4,691.1M1272.4,691.1 1268.8,694.6 1262.1,696.6 1260.2,701 1264,708.4 1262.8,712 1266,720.6 1264.7,727.8M1268.8,694.6 1270.1,697.6 1272.7,697.6 1271.7,703 1275.2,702 1279.4,701.3 1283.9,704.7 1283.5,707.7 1286.4,714.7M1286.4,714.7 1278.1,715.3 1276.5,717.6 1277.8,723.5M1286.4,714.7 1292.5,713.7 1292.8,721.6 1287.7,725.8 1282.6,727.8M1292.5,713.7 1292.5,708.7 1285.1,700.3 1281.3,696.9 1282.6,694.6 1275.2,687.7M1272.4,691.1 1275.2,687.7 1283.9,686.3 1289.9,686 1294.1,690.8M1268.8,740.7 1272,742.9 1275.2,741.3M1299.2,754.8 1302.1,758.3 1307.5,756.7 1315.8,756.7 1319,747.4 1324.8,747.8M1399.6,769.5 1399.6,790.4M1229.5,580 1239.7,598.8 1254.1,603.3 1258.9,609.9 1273.3,610.8 1284.5,614.7 1300.5,610.4 1306.6,605.6 1306.2,599.7 1314.9,597.9 1319.7,593.8 1331.8,591.9 1325.4,587.2 1318.4,586.3 1321.9,577.0M1227.9,580.5 1229.5,580 1242.9,572 1250.3,576.1 1263.1,573.6 1261.5,571 1265,565.4 1275.6,569.5 1275.9,573.1 1290.9,575.1 1296,579.5 1310.1,578 1321.9,577.0M1321.9,577 1329.9,575.6 1335,562.8 1344,558 1351.7,562.8 1356.4,575.1 1367.3,581.5 1367.6,587.2 1379.5,584.4 1374.4,599.3 1368.6,606.9 1366.4,611.2M1366.4,611.2 1358,613 1354.5,613.8 1346.5,621.0M1352,630.9 1359.3,627.2M1105.5,593.8 1103.9,586.8 1099.1,584.4 1097.5,583.4 1099.1,576.1 1104.8,576.1 1111.2,567.4 1126.9,573.1 1132.6,571 1143.8,572 1140.6,566.9 1145.7,560.6 1143.8,555.8 1156.6,553.1 1166.9,549.8 1175.8,548.1 1176.4,554.7 1183.8,555.3 1193.4,554.2 1197.9,559 1204.6,572 1215.4,571 1221.5,578 1227.9,580.5M1227.9,580.5 1222.8,583.9 1222.2,590.1 1214.2,589.6 1211.9,597.5 1205.2,599.7 1207.1,607.8 1205.2,612.1M1205.2,612.1 1201.4,609.5 1190.8,608.6 1183.8,608.6 1184.1,611.2 1175.8,610.4 1175.5,611.7 1169.4,615.5 1166.2,617.2 1162.1,616.4 1159.8,609.1 1147,606.4 1143.8,602.4 1136.2,597 1127.8,599.7 1127.8,616 1121.5,611.7 1116.7,613.8M1127.8,616 1131.4,616 1136.2,609.5 1140.6,612.1 1146.7,616.8 1153.4,625.6 1161.4,632.1M1205.2,612.1 1199.5,617.2 1194.7,617.2 1184.8,622.3 1184.4,623.9 1188.6,627.6 1188.3,632.9M1184.4,623.9 1178.4,624.4 1170.4,623.5 1174.2,620.6 1182.2,618.1 1175.5,611.7M1166.2,633.7 1167.5,628.9 1164.3,623.5 1170.4,623.5M920.3,613.4 922.6,612.5 927.7,613.4 929,614.7 926.7,617.2 926.4,622.7 924.8,623.1 926.4,628.9 925.1,632.9M943,606.9 951,609.5 959,611.2M972.8,605.1 971.2,602.9 970.9,599.3 971.2,595.6M971.2,595.6 968.3,594.3 968.3,592.4 971.2,588.2 973.1,587.7M973.1,587.7 975,581 969.3,578.5M969.3,578.5 967.3,578.5 964.1,576.1 962.2,574.6 956.8,570.5M959.7,569 962.5,569 964.8,568.5 967.7,571 968,572.0M968,572 968.6,566.4 970.5,566.4 971.5,564.3 971.8,559.0M968,572 969.3,574.6 968.3,575.6 969.3,578.5M976.6,550.3 980.5,550.9M994.2,555.8 995.5,562.8 995.8,568.5 996.8,571.0M996.8,571 990.4,574.1 987.5,574.6 992.9,582.0M992.9,582 990.4,588.2 987.8,587.7 982.4,588.2 979.5,588.2 976,587.7 973.1,587.7M971.2,595.6 975.7,593.3 977.6,595.6 981.1,592.4 982.4,591.0M982.4,591 987.8,590.5 992.6,592.9 992.6,596.6M979.5,588.2 979.5,590.5 982.4,591.0M992.6,592.9 1000.3,591.5 1003.5,585.8M992.9,582 996.8,581 1002.8,582.9 1003.5,585.8M996.8,571 1000.9,573.1 1003.2,575.1 1008.9,578.5 1003.5,582 1002.8,582.9M1008.9,578.5 1012.7,580 1020.7,580.5M1020.7,580.5 1025.9,573.6 1024.3,568.5 1023.9,562.8 1025.2,558 1023.9,555.8 1021.7,553.1 1012.1,553.1M1021.7,553.1 1021.4,550.3 1016.9,548.1M1015.9,543.5 1025.5,542.4 1033.8,545.8M1023.9,555.8 1030.3,554.2 1033.8,545.8 1039,543.5 1036.4,535.4 1036.7,527.5 1038.3,523.1M1026.5,533 1036.4,535.4M1039,543.5 1047.6,546.4 1047.3,550.9 1053.3,558.5 1049.2,559.6 1050.5,565.4M1024.3,568.5 1036.7,568 1046.3,569.5 1050.5,565.4M1050.5,565.4 1058.8,566.9 1062.6,574.1 1070.3,576.6 1077.3,578 1075.7,586.8 1070.9,590.1M1019.8,583.9 1022,585.8 1028.4,587.2 1033.8,584.4 1036.7,583.4 1041.8,586.3 1045,593.3 1039,597.5 1043.8,598.8M1033.8,584.4 1039,592.4 1039,597.5M1003.5,585.8 1008.9,586.8 1014.3,583.4 1019.8,583.9 1020.7,580.5M1022,585.8 1015.9,594.3 1013.7,594.7M1013.7,594.7 1009.2,595.6 1003.2,595.2 1001.6,592.9 1000.3,591.5M1013.7,594.7 1017.5,600.6 1020.7,601.1 1021.4,603.3M1021.4,603.3 1028.7,605.6 1035.1,603.8 1040.2,605.6M1021.4,603.3 1020.4,608.6 1020.4,611.7 1022.3,616.0M1022.3,616 1027.1,615.1 1032.2,614.3 1033.2,614.3 1038.3,613.0M1033.2,614.3 1031.9,618.1M1012.7,622.7 1015.9,618.1 1022.3,616.0M1015.9,618.1 1014.3,615.1 1014.7,613 1013.1,610.4 1010.8,613.4M992.3,597.5 997.7,597.5 999,594.3 1001.6,592.9M999.3,598.8 1003.2,598.8 1009.5,600.2 1010.2,604.2 1011.1,606 1007.9,610.8 1005.1,608.6 1000.6,603.3 999.3,598.8M1009.5,600.2 1009.5,595.6M1020.4,611.7 1017.5,611.7 1014.7,613.0M1007.9,610.8 1010.5,606.4 1013.7,609.5 1013.1,610.4M985.6,526.2 988.8,516.7 987.8,510.1 987.8,499.8 993.6,489 995.2,476.7 1000,465.4 1006.7,456.8 1014.3,452.4M1014.3,452.4 1024.6,462 1025.9,479.1M1014.3,452.4 1031,452.4 1031.9,446.1 1038.3,443.3 1041.5,451.5 1047.3,445.2M1041.5,451.5 1044.7,463.7 1041.5,470.3 1045,479.9 1043.8,486.7 1049.8,500.5 1043.8,511.5 1037.7,516.7M925.5,549.8 923.2,552.5 925.5,554.7 928.7,554.7" fill="none" stroke="#212427" stroke-width="1.05" stroke-linejoin="round"/>
</g></defs>
<g clip-path="url(#mc)"><use href="#world" x="-1151"/><use href="#world"/><use href="#world" x="1151"/></g>
<g clip-path="url(#mc)">
<text transform="translate(642.0 583.6) scale(1.10 1)" text-anchor="middle" style="font-family:&quot;Liberation Sans&quot;,Arial,sans-serif;font-size:14.6px;font-weight:700;letter-spacing:0.5px;" fill="#131313" stroke="#131313" stroke-width="2.2" stroke-linejoin="round">NORTH</text><text transform="translate(642.0 583.6) scale(1.10 1)" text-anchor="middle" style="font-family:&quot;Liberation Sans&quot;,Arial,sans-serif;font-size:14.6px;font-weight:700;letter-spacing:0.5px;" fill="#3b3b3d" stroke="#3b3b3d" stroke-width="0.00">NORTH</text><text transform="translate(642.0 602.6) scale(1.10 1)" text-anchor="middle" style="font-family:&quot;Liberation Sans&quot;,Arial,sans-serif;font-size:14.6px;font-weight:700;letter-spacing:0.5px;" fill="#131313" stroke="#131313" stroke-width="2.2" stroke-linejoin="round">AMERICA</text><text transform="translate(642.0 602.6) scale(1.10 1)" text-anchor="middle" style="font-family:&quot;Liberation Sans&quot;,Arial,sans-serif;font-size:14.6px;font-weight:700;letter-spacing:0.5px;" fill="#3b3b3d" stroke="#3b3b3d" stroke-width="0.00">AMERICA</text>
<text transform="translate(754.8 801.7) scale(1.10 1)" text-anchor="middle" style="font-family:&quot;Liberation Sans&quot;,Arial,sans-serif;font-size:14.6px;font-weight:700;letter-spacing:0.5px;" fill="#131313" stroke="#131313" stroke-width="2.2" stroke-linejoin="round">SOUTH</text><text transform="translate(754.8 801.7) scale(1.10 1)" text-anchor="middle" style="font-family:&quot;Liberation Sans&quot;,Arial,sans-serif;font-size:14.6px;font-weight:700;letter-spacing:0.5px;" fill="#3b3b3d" stroke="#3b3b3d" stroke-width="0.00">SOUTH</text><text transform="translate(754.8 820.5) scale(1.10 1)" text-anchor="middle" style="font-family:&quot;Liberation Sans&quot;,Arial,sans-serif;font-size:14.6px;font-weight:700;letter-spacing:0.5px;" fill="#131313" stroke="#131313" stroke-width="2.2" stroke-linejoin="round">AMERICA</text><text transform="translate(754.8 820.5) scale(1.10 1)" text-anchor="middle" style="font-family:&quot;Liberation Sans&quot;,Arial,sans-serif;font-size:14.6px;font-weight:700;letter-spacing:0.5px;" fill="#3b3b3d" stroke="#3b3b3d" stroke-width="0.00">AMERICA</text>
<text transform="translate(1175.2 621.2) scale(1.10 1)" text-anchor="middle" style="font-family:&quot;Liberation Sans&quot;,Arial,sans-serif;font-size:14.6px;font-weight:700;letter-spacing:0.5px;" fill="#131313" stroke="#131313" stroke-width="2.2" stroke-linejoin="round">ASIA</text><text transform="translate(1175.2 621.2) scale(1.10 1)" text-anchor="middle" style="font-family:&quot;Liberation Sans&quot;,Arial,sans-serif;font-size:14.6px;font-weight:700;letter-spacing:0.5px;" fill="#3b3b3d" stroke="#3b3b3d" stroke-width="0.00">ASIA</text>
<text transform="translate(1038.3 737.3) scale(1.10 1)" text-anchor="middle" style="font-family:&quot;Liberation Sans&quot;,Arial,sans-serif;font-size:14.6px;font-weight:700;letter-spacing:0.5px;" fill="#131313" stroke="#131313" stroke-width="2.2" stroke-linejoin="round">AFRICA</text><text transform="translate(1038.3 737.3) scale(1.10 1)" text-anchor="middle" style="font-family:&quot;Liberation Sans&quot;,Arial,sans-serif;font-size:14.6px;font-weight:700;letter-spacing:0.5px;" fill="#3b3b3d" stroke="#3b3b3d" stroke-width="0.00">AFRICA</text>
<text transform="translate(950.2 1203.6) scale(1.10 1)" text-anchor="middle" style="font-family:&quot;Liberation Sans&quot;,Arial,sans-serif;font-size:14.6px;font-weight:700;letter-spacing:0.5px;" fill="#131313" stroke="#131313" stroke-width="2.2" stroke-linejoin="round">ANTARCTICA</text><text transform="translate(950.2 1203.6) scale(1.10 1)" text-anchor="middle" style="font-family:&quot;Liberation Sans&quot;,Arial,sans-serif;font-size:14.6px;font-weight:700;letter-spacing:0.5px;" fill="#3b3b3d" stroke="#3b3b3d" stroke-width="0.00">ANTARCTICA</text>
<text transform="translate(345.0 836.7) scale(1.00 1)" text-anchor="middle" style="font-family:&quot;Liberation Sans&quot;,Arial,sans-serif;font-size:15.5px;font-weight:400;letter-spacing:1.0px;" fill="#1a1a1a" stroke="#1a1a1a" stroke-width="2.8" stroke-linejoin="round">OCEAN</text><text transform="translate(345.0 836.7) scale(1.00 1)" text-anchor="middle" style="font-family:&quot;Liberation Sans&quot;,Arial,sans-serif;font-size:15.5px;font-weight:400;letter-spacing:1.0px;" fill="#3a3a3c" stroke="#3a3a3c" stroke-width="0.45">OCEAN</text>
<text transform="translate(1496.0 836.7) scale(1.00 1)" text-anchor="middle" style="font-family:&quot;Liberation Sans&quot;,Arial,sans-serif;font-size:15.5px;font-weight:400;letter-spacing:1.0px;" fill="#1a1a1a" stroke="#1a1a1a" stroke-width="2.8" stroke-linejoin="round">OCEAN</text><text transform="translate(1496.0 836.7) scale(1.00 1)" text-anchor="middle" style="font-family:&quot;Liberation Sans&quot;,Arial,sans-serif;font-size:15.5px;font-weight:400;letter-spacing:1.0px;" fill="#3a3a3c" stroke="#3a3a3c" stroke-width="0.45">OCEAN</text>
<text transform="translate(406.0 246.0) scale(1.12 1)" text-anchor="middle" style="font-family:&quot;Liberation Sans&quot;,Arial,sans-serif;font-size:15.5px;font-weight:400;letter-spacing:1.6px;font-style:italic;" fill="#1a1a1a" stroke="#1a1a1a" stroke-width="2.8" stroke-linejoin="round">Arctic</text><text transform="translate(406.0 246.0) scale(1.12 1)" text-anchor="middle" style="font-family:&quot;Liberation Sans&quot;,Arial,sans-serif;font-size:15.5px;font-weight:400;letter-spacing:1.6px;font-style:italic;" fill="#3a3a3c" stroke="#3a3a3c" stroke-width="0.45">Arctic</text><text transform="translate(406.0 263.0) scale(1.12 1)" text-anchor="middle" style="font-family:&quot;Liberation Sans&quot;,Arial,sans-serif;font-size:15.5px;font-weight:400;letter-spacing:1.6px;font-style:italic;" fill="#1a1a1a" stroke="#1a1a1a" stroke-width="2.8" stroke-linejoin="round">Ocean</text><text transform="translate(406.0 263.0) scale(1.12 1)" text-anchor="middle" style="font-family:&quot;Liberation Sans&quot;,Arial,sans-serif;font-size:15.5px;font-weight:400;letter-spacing:1.6px;font-style:italic;" fill="#3a3a3c" stroke="#3a3a3c" stroke-width="0.45">Ocean</text>
<text transform="translate(1557.0 246.0) scale(1.12 1)" text-anchor="middle" style="font-family:&quot;Liberation Sans&quot;,Arial,sans-serif;font-size:15.5px;font-weight:400;letter-spacing:1.6px;font-style:italic;" fill="#1a1a1a" stroke="#1a1a1a" stroke-width="2.8" stroke-linejoin="round">Arctic</text><text transform="translate(1557.0 246.0) scale(1.12 1)" text-anchor="middle" style="font-family:&quot;Liberation Sans&quot;,Arial,sans-serif;font-size:15.5px;font-weight:400;letter-spacing:1.6px;font-style:italic;" fill="#3a3a3c" stroke="#3a3a3c" stroke-width="0.45">Arctic</text><text transform="translate(1557.0 263.0) scale(1.12 1)" text-anchor="middle" style="font-family:&quot;Liberation Sans&quot;,Arial,sans-serif;font-size:15.5px;font-weight:400;letter-spacing:1.6px;font-style:italic;" fill="#1a1a1a" stroke="#1a1a1a" stroke-width="2.8" stroke-linejoin="round">Ocean</text><text transform="translate(1557.0 263.0) scale(1.12 1)" text-anchor="middle" style="font-family:&quot;Liberation Sans&quot;,Arial,sans-serif;font-size:15.5px;font-weight:400;letter-spacing:1.6px;font-style:italic;" fill="#3a3a3c" stroke="#3a3a3c" stroke-width="0.45">Ocean</text>
<text transform="translate(1173.0 791.0) scale(1.12 1)" text-anchor="middle" style="font-family:&quot;Liberation Sans&quot;,Arial,sans-serif;font-size:15.5px;font-weight:400;letter-spacing:1.6px;font-style:italic;" fill="#1a1a1a" stroke="#1a1a1a" stroke-width="2.8" stroke-linejoin="round">Indian</text><text transform="translate(1173.0 791.0) scale(1.12 1)" text-anchor="middle" style="font-family:&quot;Liberation Sans&quot;,Arial,sans-serif;font-size:15.5px;font-weight:400;letter-spacing:1.6px;font-style:italic;" fill="#3a3a3c" stroke="#3a3a3c" stroke-width="0.45">Indian</text><text transform="translate(1173.0 808.0) scale(1.12 1)" text-anchor="middle" style="font-family:&quot;Liberation Sans&quot;,Arial,sans-serif;font-size:15.5px;font-weight:400;letter-spacing:1.6px;font-style:italic;" fill="#1a1a1a" stroke="#1a1a1a" stroke-width="2.8" stroke-linejoin="round">Ocean</text><text transform="translate(1173.0 808.0) scale(1.12 1)" text-anchor="middle" style="font-family:&quot;Liberation Sans&quot;,Arial,sans-serif;font-size:15.5px;font-weight:400;letter-spacing:1.6px;font-style:italic;" fill="#3a3a3c" stroke="#3a3a3c" stroke-width="0.45">Ocean</text>
<text transform="translate(1237.0 1000.4) scale(1.12 1)" text-anchor="middle" style="font-family:&quot;Liberation Sans&quot;,Arial,sans-serif;font-size:15.5px;font-weight:400;letter-spacing:1.6px;font-style:italic;" fill="#1a1a1a" stroke="#1a1a1a" stroke-width="2.8" stroke-linejoin="round">Southern</text><text transform="translate(1237.0 1000.4) scale(1.12 1)" text-anchor="middle" style="font-family:&quot;Liberation Sans&quot;,Arial,sans-serif;font-size:15.5px;font-weight:400;letter-spacing:1.6px;font-style:italic;" fill="#3a3a3c" stroke="#3a3a3c" stroke-width="0.45">Southern</text><text transform="translate(1237.0 1017.4) scale(1.12 1)" text-anchor="middle" style="font-family:&quot;Liberation Sans&quot;,Arial,sans-serif;font-size:15.5px;font-weight:400;letter-spacing:1.6px;font-style:italic;" fill="#1a1a1a" stroke="#1a1a1a" stroke-width="2.8" stroke-linejoin="round">Ocean</text><text transform="translate(1237.0 1017.4) scale(1.12 1)" text-anchor="middle" style="font-family:&quot;Liberation Sans&quot;,Arial,sans-serif;font-size:15.5px;font-weight:400;letter-spacing:1.6px;font-style:italic;" fill="#3a3a3c" stroke="#3a3a3c" stroke-width="0.45">Ocean</text>
</g>
<g clip-path="url(#mc)">
<circle cx="162.8" cy="687.8" r="12.0" fill="#ff9830" fill-opacity="0.47" stroke="#ff9830" stroke-width="1.1"/><text class="lbl" fill="#ff9830" stroke="#ff9830" x="162.0" y="711.0">HKG</text><circle cx="281.2" cy="876.3" r="14.3" fill="#f4655a" fill-opacity="0.47" stroke="#f4655a" stroke-width="1.1"/><text class="lbl" fill="#f4655a" stroke="#f4655a" x="281.0" y="898.7">SYD</text><circle cx="1313.8" cy="687.8" r="12.0" fill="#ff9830" fill-opacity="0.47" stroke="#ff9830" stroke-width="1.1"/><text class="lbl" fill="#ff9830" stroke="#ff9830" x="1313.0" y="711.0">HKG</text><circle cx="1432.2" cy="876.3" r="14.3" fill="#f4655a" fill-opacity="0.47" stroke="#f4655a" stroke-width="1.1"/><text class="lbl" fill="#f4655a" stroke="#f4655a" x="1432.0" y="898.7">SYD</text><circle cx="701.4" cy="625.5" r="12.0" fill="#ff9830" fill-opacity="0.47" stroke="#ff9830" stroke-width="1.1"/><circle cx="701.8" cy="625.7" r="3.6" fill="#a9a4b4" fill-opacity=".85" stroke="#8d8a9c" stroke-width=".8"/><text class="lbl" fill="#ff9830" stroke="#ff9830" x="701.0" y="648.7">IAD</text><circle cx="800.9" cy="837.7" r="12.0" fill="#ff9830" fill-opacity="0.47" stroke="#ff9830" stroke-width="1.1"/><text class="lbl" fill="#ff9830" stroke="#ff9830" x="800.5" y="860.7">GRU</text><circle cx="1039.5" cy="847.4" r="15.3" fill="#f2495c" fill-opacity="0.47" stroke="#f2495c" stroke-width="1.1"/><text class="lbl" fill="#f2495c" stroke="#f2495c" x="1039.5" y="870.7">JNB</text><circle cx="957.3" cy="580.4" r="15.5" fill="#b877d9" fill-opacity="0.50" stroke="#b877d9" stroke-width="1.1"/><circle cx="964.9" cy="563.8" r="12.1" fill="#ff9830" fill-opacity="0.55" stroke="#ff9830" stroke-width="1.1"/><circle cx="977.1" cy="575.9" r="3.7" fill="#5794f2" fill-opacity="0.50" stroke="#5794f2" stroke-width="1.1"/><text class="lbl" fill="#ff9830" stroke="#ff9830" x="964.7" y="586.8">AMS</text>
</g>
</svg>

<!-- zoom control -->
<div class="abs" style="left:81px;top:144px;width:25px;height:46px;border-radius:4px;background:#1b1c1f"></div>
<div class="abs" style="left:84px;top:147px;width:19px;height:19px;border-radius:2px 2px 0 0;background:#3a3a3c"></div>
<div class="abs" style="left:84px;top:167px;width:19px;height:20px;border-radius:0 0 2px 2px;background:#3a3a3c"></div>
<div class="abs" style="left:89.7px;top:155.7px;width:7.6px;height:1.6px;background:#e4e4ea"></div>
<div class="abs" style="left:92.7px;top:152.7px;width:1.6px;height:7.6px;background:#e4e4ea"></div>
<div class="abs" style="left:89.7px;top:175.2px;width:7.6px;height:1.6px;background:#e4e4ea"></div>

<!-- legend -->
<div class="abs" style="left:82px;top:1130px;width:216px;height:151px;background:#22252b"></div>
<div class="abs" style="left:82px;top:1203.2px;width:216px;height:2px;background:#474a53"></div>
<div class="abs" style="left:82px;top:1279.2px;width:216px;height:2px;background:#474a53"></div>
<div class="t" id="le" style="left:90px;top:1142px;font-size:14px;color:#d5d6e2;letter-spacing:-.1px">Edge</div>
<div class="abs" style="left:100px;top:1169px;width:190px;height:10px;background:linear-gradient(90deg,#5794f2,#b877d9)"></div>
<div class="t" id="l1" style="left:100px;top:1181px;font-size:11px;font-weight:700;color:#d5d6e2;letter-spacing:-.1px">0 B/s</div>
<div class="t" id="l2" style="right:1410px;top:1181px;font-size:11px;font-weight:700;color:#d5d6e2;letter-spacing:-.1px">7.21 kB/s</div>
<div class="t" id="li" style="left:90px;top:1216.5px;font-size:14px;color:#d5d6e2;letter-spacing:.4px">Instance</div>
<div class="abs" style="left:100px;top:1244px;width:190px;height:10px;background:linear-gradient(90deg,#73bf69 0%,#c8cf3e 30%,#fade2a 50%,#ff9830 75%,#f2495c 100%)"></div>
<div class="t" id="l3" style="left:100px;top:1256px;font-size:11px;font-weight:700;color:#d5d6e2;letter-spacing:-.1px">0 B/s</div>
<div class="t" id="l4" style="right:1410px;top:1256px;font-size:11px;font-weight:700;color:#d5d6e2;letter-spacing:-.1px">34.3 kB/s</div>

</div>
<!-- window drag dots -->
<div class="abs" style="left:1713px;top:15.500px;width:4px;height:4px;border-radius:2px;background:#8e7a6a"></div>
<div class="abs" style="left:1713px;top:21px;width:4px;height:4px;border-radius:2px;background:#8e7a6a"></div>
<div class="abs" style="left:1713px;top:26.500px;width:4px;height:4px;border-radius:2px;background:#8e7a6a"></div>
</div>
</body>
</html>
